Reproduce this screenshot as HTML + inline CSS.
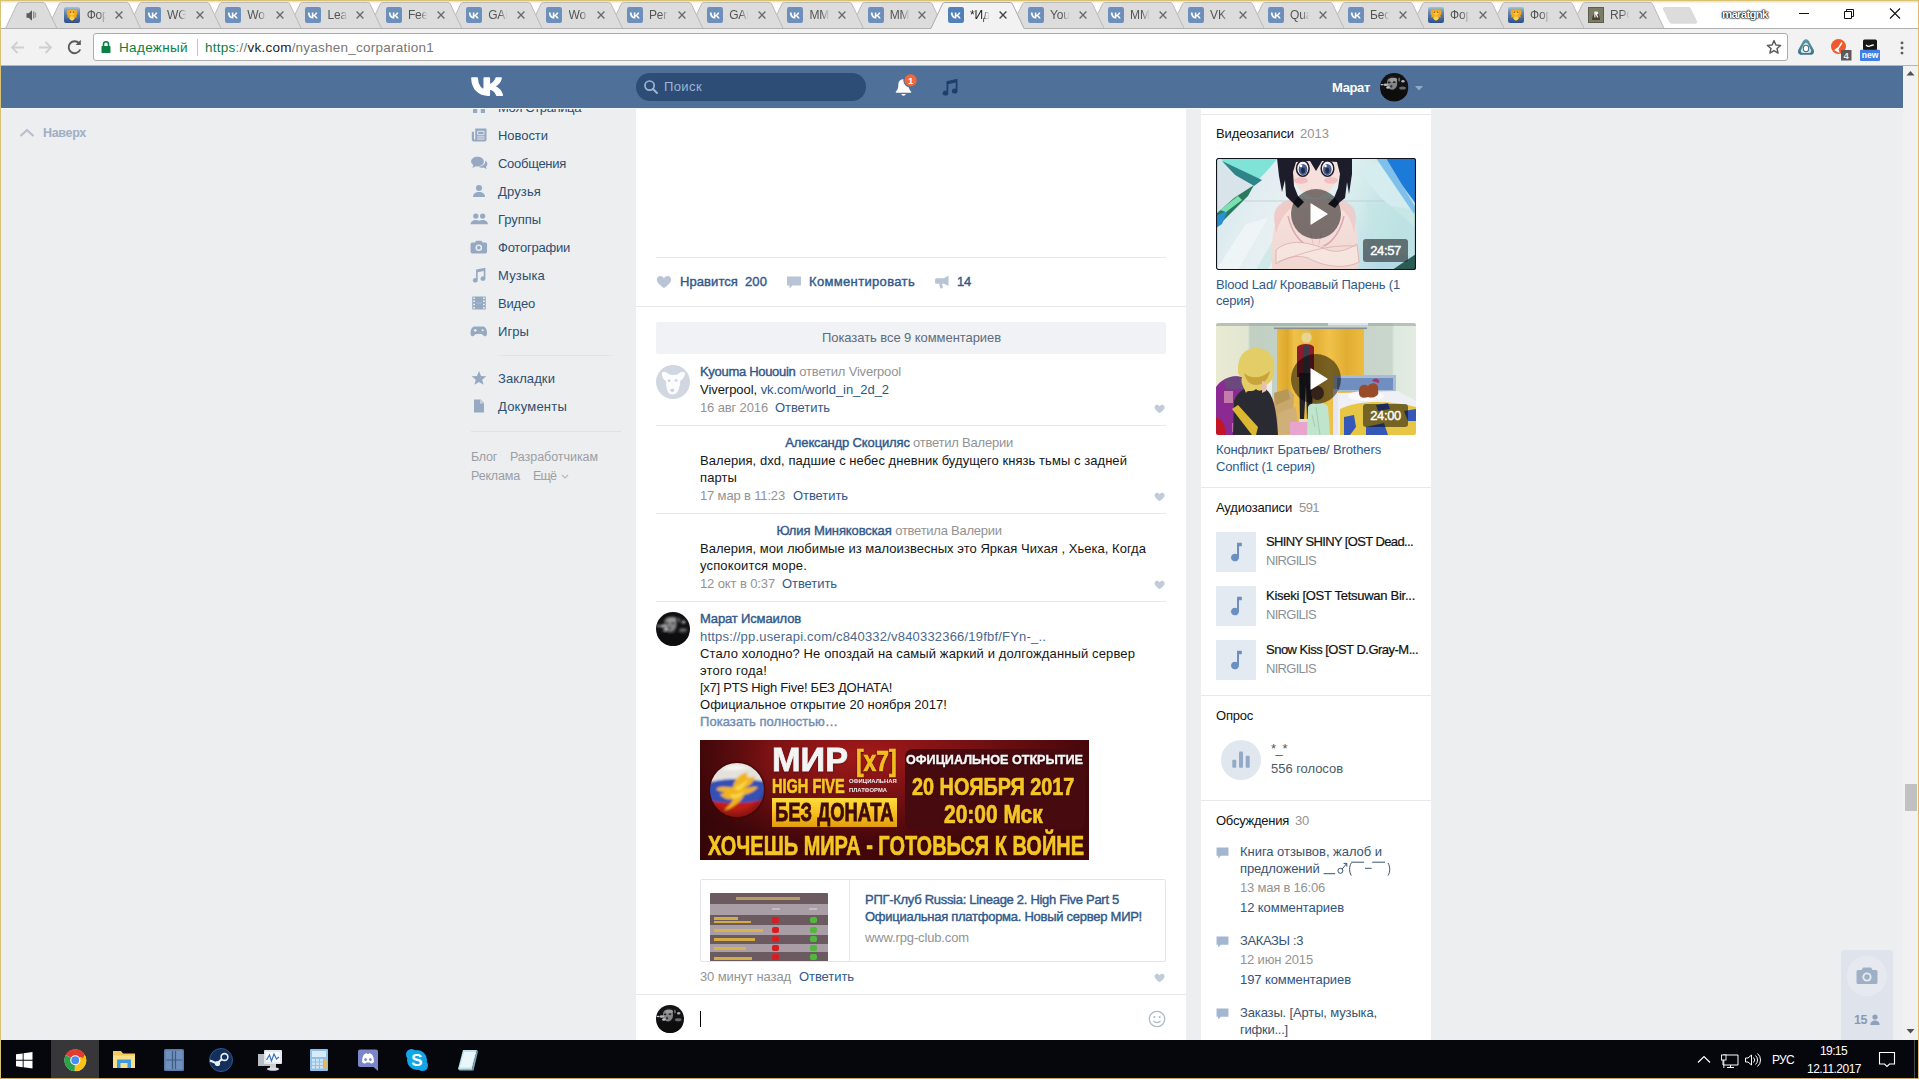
<!DOCTYPE html>
<html lang="ru"><head><meta charset="utf-8"><title>vk</title>
<style>
*{margin:0;padding:0;box-sizing:border-box}
html,body{width:1919px;height:1079px;overflow:hidden;background:#edeef0;font-family:"Liberation Sans",sans-serif;font-size:13px}
.a{position:absolute}
.t{position:absolute;white-space:nowrap}
svg{position:absolute;overflow:visible}
.sep{position:absolute;height:1px;background:#e7e8ec}
.b{font-weight:700}
</style></head><body>

<div class="a" style="left:636px;top:108px;width:550px;height:932px;background:#fff"></div>
<div class="a" style="left:1201px;top:108px;width:230px;height:932px;background:#fff"></div>
<svg width="16" height="10" style="left:19px;top:128px" viewBox="0 0 16 10"><path d="M1.5,8 L8,2 L14.5,8" stroke="#b4bdc9" stroke-width="2" fill="none"/></svg>
<span class="t" style="left:43px;top:125.00px;font-size:12.5px;line-height:16px;color:#a0afc3;font-weight:700;letter-spacing:-0.312px;">Наверх</span>
<svg width="16.0" height="16.0" style="left:471.0px;top:99.0px" viewBox="0 0 16 16"><path d="M2,7.5 L8,2 L14,7.5 V14 H9.8 V9.5 H6.2 V14 H2z" fill="#96a9c2"/></svg>
<span class="t" style="left:498px;top:98.50px;font-size:13px;line-height:17px;color:#2b4f72;letter-spacing:-0.398px;">Моя Страница</span>
<svg width="16.0" height="16.0" style="left:471.0px;top:127.0px" viewBox="0 0 16 16"><path d="M4.2,1.500 H15.500 V12.800 a1.700,1.700 0 0 1 -1.700,1.700 H2.700 a1.900,1.900 0 0 1 -1.900,-1.900 V4.800 H3 V12 a0.600,0.600 0 0 0 1.200,0z" fill="#96a9c2"/><path d="M6.700,4.300 h6.300 v3.400 h-6.300z" stroke="#e4e8ee" stroke-width="1" fill="none"/><path d="M6.200,9.900 h7.300 M6.200,12 h7.300" stroke="#e4e8ee" stroke-width="1"/></svg>
<span class="t" style="left:498px;top:126.50px;font-size:13px;line-height:17px;color:#2b4f72;letter-spacing:-0.047px;">Новости</span>
<svg width="17.6" height="17.6" style="left:470.2px;top:154.2px" viewBox="0 0 16 16"><path d="M6.8,2.5 c3.3,0 5.8,1.9 5.8,4.4 c0,2.5 -2.5,4.4 -5.8,4.4 c-0.6,0 -1.2,-0.1 -1.8,-0.2 c-0.8,0.7 -1.9,1.2 -3,1.3 c0.6,-0.7 0.9,-1.500 1,-2.4 C1.700,9.200 1,8.100 1,6.900 C1,4.400 3.500,2.500 6.800,2.500z" fill="#96a9c2"/><path d="M13.800,6 c1.200,0.700 2,1.800 2,3 c0,1 -0.500,1.900 -1.300,2.600 c0.100,0.700 0.400,1.400 0.900,1.900 c-1,-0.100 -1.900,-0.500 -2.600,-1.100 c-0.500,0.100 -1,0.200 -1.600,0.200 c-1.300,0 -2.500,-0.400 -3.400,-1 c3.500,-0.300 6.100,-2.400 6.100,-5 c0,-0.200 0,-0.400 -0.100,-0.600z" fill="#96a9c2"/></svg>
<span class="t" style="left:498px;top:154.50px;font-size:13px;line-height:17px;color:#2b4f72;letter-spacing:-0.285px;">Сообщения</span>
<svg width="16.0" height="16.0" style="left:471.0px;top:183.0px" viewBox="0 0 16 16"><circle cx="8" cy="5" r="3" fill="#96a9c2"/><path d="M2,14 c0,-3.300 2.500,-5 6,-5 c3.500,0 6,1.700 6,5z" fill="#96a9c2"/></svg>
<span class="t" style="left:498px;top:182.50px;font-size:13px;line-height:17px;color:#2b4f72;letter-spacing:0.138px;">Друзья</span>
<svg width="17.6" height="17.6" style="left:470.2px;top:210.2px" viewBox="0 0 16 16"><circle cx="5.300" cy="5.500" r="2.400" fill="#96a9c2"/><circle cx="11.500" cy="5.500" r="2.400" fill="#96a9c2"/><path d="M0.500,13 c0,-2.600 2,-4 4.800,-4 c1.200,0 2.200,0.300 3,0.700 c0.800,-0.400 1.900,-0.700 3.200,-0.700 c2.800,0 4.800,1.400 4.800,4z" fill="#96a9c2"/></svg>
<span class="t" style="left:498px;top:210.50px;font-size:13px;line-height:17px;color:#2b4f72;letter-spacing:-0.055px;">Группы</span>
<svg width="17.6" height="17.6" style="left:470.2px;top:238.2px" viewBox="0 0 16 16"><path d="M5.500,2.500 h5 l1,1.700 h2.500 a1.500,1.500 0 0 1 1.500,1.500 v6.800 a1.500,1.500 0 0 1 -1.500,1.500 h-12 a1.500,1.500 0 0 1 -1.500,-1.500 v-6.800 a1.500,1.500 0 0 1 1.500,-1.500 h2.500z" fill="#96a9c2"/><circle cx="8" cy="8.800" r="3" fill="#edeef0"/><circle cx="8" cy="8.800" r="1.700" fill="#96a9c2"/></svg>
<span class="t" style="left:498px;top:238.50px;font-size:13px;line-height:17px;color:#2b4f72;letter-spacing:-0.230px;">Фотографии</span>
<svg width="17.6" height="17.6" style="left:470.2px;top:266.2px" viewBox="0 0 16 16"><path d="M5.500,3.200 L14,1.500 V11.500 a2.200,2 0 1 1 -1.500,-1.900 V4.600 L7,5.700 V13 a2.200,2 0 1 1 -1.500,-1.900 z" fill="#96a9c2"/></svg>
<span class="t" style="left:498px;top:266.50px;font-size:13px;line-height:17px;color:#2b4f72;letter-spacing:0.169px;">Музыка</span>
<svg width="16.0" height="16.0" style="left:471.0px;top:295.0px" viewBox="0 0 16 16"><rect x="1.200" y="1.500" width="13.600" height="13" rx="0.800" fill="#96a9c2"/><path d="M2.300,3.300 h1.700 M2.300,6.300 h1.700 M2.300,9.500 h1.700 M2.300,12.700 h1.700 M12,3.300 h1.700 M12,6.300 h1.700 M12,9.500 h1.700 M12,12.700 h1.700" stroke="#edeef0" stroke-width="1.600"/><path d="M5.300,8 h5.400" stroke="#b9c6d8" stroke-width="0.700"/></svg>
<span class="t" style="left:498px;top:294.50px;font-size:13px;line-height:17px;color:#2b4f72;letter-spacing:-0.197px;">Видео</span>
<svg width="17.6" height="17.6" style="left:470.2px;top:322.2px" viewBox="0 0 16 16"><path d="M4.500,4 h7 c2.500,0 3.800,2.500 4,5.500 c0.200,2.500 -0.800,3.500 -2,3.500 c-1.500,0 -2,-2 -3.500,-2 h-4 c-1.500,0 -2,2 -3.500,2 c-1.200,0 -2.200,-1 -2,-3.500 c0.200,-3 1.500,-5.500 4,-5.500z" fill="#96a9c2"/><circle cx="11.500" cy="7.500" r="1" fill="#edeef0"/><path d="M4.800,6.300 v2.600 M3.500,7.600 h2.600" stroke="#edeef0" stroke-width="1"/></svg>
<span class="t" style="left:498px;top:322.50px;font-size:13px;line-height:17px;color:#2b4f72;letter-spacing:0.082px;">Игры</span>
<div class="sep" style="left:495px;top:355px;width:121px;background:linear-gradient(90deg,rgba(223,225,229,0),#dfe1e5 8%,#dfe1e5 92%,rgba(223,225,229,0))"></div>
<svg width="16.0" height="16.0" style="left:471.0px;top:370.0px" viewBox="0 0 16 16"><path d="M8,1 L10,6 L15.300,6.300 L11.200,9.700 L12.600,14.800 L8,11.900 L3.400,14.800 L4.800,9.700 L0.700,6.300 L6,6z" fill="#96a9c2"/></svg>
<span class="t" style="left:498px;top:370.00px;font-size:13px;line-height:17px;color:#2b4f72;letter-spacing:0.092px;">Закладки</span>
<svg width="16.0" height="16.0" style="left:471.0px;top:398.0px" viewBox="0 0 16 16"><path d="M3,1.500 h6.500 l3.500,3.500 v9.500 h-10z" fill="#96a9c2"/><path d="M9,1.500 v4 h4z" fill="#c9d3df"/></svg>
<span class="t" style="left:498px;top:398.00px;font-size:13px;line-height:17px;color:#2b4f72;letter-spacing:0.220px;">Документы</span>
<div class="sep" style="left:471px;top:431px;width:150px;background:#dfe1e5"></div>
<span class="t" style="left:471px;top:448.75px;font-size:12.5px;line-height:16.5px;color:#9a9ea3;letter-spacing:-0.254px;">Блог</span>
<span class="t" style="left:510px;top:448.75px;font-size:12.5px;line-height:16.5px;color:#9a9ea3;letter-spacing:-0.055px;">Разработчикам</span>
<span class="t" style="left:471px;top:467.75px;font-size:12.5px;line-height:16.5px;color:#9a9ea3;letter-spacing:-0.163px;">Реклама</span>
<span class="t" style="left:533px;top:467.75px;font-size:12.5px;line-height:16.5px;color:#9a9ea3;letter-spacing:-0.859px;">Ещё</span>
<svg width="8" height="6" style="left:561px;top:474px" viewBox="0 0 8 6"><path d="M1,1 L4,4 L7,1" stroke="#b5b9bf" stroke-width="1.200" fill="none"/></svg>
<div class="sep" style="left:656px;top:257px;width:510px"></div>
<svg width="16.0" height="14.0" style="left:656px;top:275px" viewBox="0 0 16 14"><path d="M8,13.200 C5,10.800 0.800,7.800 0.800,4.500 C0.800,2.400 2.400,0.900 4.300,0.900 C5.800,0.900 7.200,1.800 8,3.200 C8.800,1.800 10.200,0.900 11.700,0.900 C13.600,0.900 15.200,2.400 15.200,4.500 C15.200,7.800 11,10.800 8,13.200z" fill="#b9c5d6"/></svg>
<span class="t" style="left:680px;top:272.80px;font-size:13px;line-height:17px;color:#31598a;-webkit-text-stroke:0.4px;letter-spacing:0.078px;">Нравится</span>
<span class="t" style="left:745px;top:272.80px;font-size:13px;line-height:17px;color:#31598a;-webkit-text-stroke:0.4px;letter-spacing:0.099px;">200</span>
<svg width="16" height="14" style="left:786px;top:276px" viewBox="0 0 16 14"><path d="M1,0.500 h14 v9 h-8.500 l-3,3 v-3 h-2.500z" fill="#b9c5d6"/></svg>
<span class="t" style="left:809px;top:272.80px;font-size:13px;line-height:17px;color:#31598a;-webkit-text-stroke:0.4px;letter-spacing:0.343px;">Комментировать</span>
<svg width="16" height="14" style="left:934px;top:275px" viewBox="0 0 16 14"><path d="M14.500,0.500 v10.500 l-4.500,-2.200 h-2 l1,4.500 h-2.800 l-1,-4.500 h-2.700 a1.500,1.500 0 0 1 -1.500,-1.500 v-2.500 a1.500,1.500 0 0 1 1.500,-1.500 h7.500z" fill="#b9c5d6"/></svg>
<span class="t" style="left:957px;top:272.80px;font-size:13px;line-height:17px;color:#31598a;-webkit-text-stroke:0.4px;letter-spacing:-0.234px;">14</span>
<div class="sep" style="left:636px;top:306px;width:550px"></div>
<div class="a" style="left:656px;top:322px;width:510px;height:32px;background:#f0f2f5;border-radius:2px"></div>
<span class="t" style="left:822px;top:328.80px;font-size:13px;line-height:17px;color:#5e6c7d;letter-spacing:-0.068px;">Показать все 9 комментариев</span>
<svg width="34" height="34" style="left:656px;top:365px" viewBox="0 0 34 34"><circle cx="17" cy="17" r="17" fill="#d1d7e0"/><path d="M6,7.500 C8.500,5.500 11,7.500 13,9.200 C15.500,10.200 19.500,10.200 22,9.200 C24,7.500 26.500,5.500 29,7.800 C29,12 26.500,14.500 24.200,16 C24.200,20.500 22.500,27 19.500,28.800 C17.500,29.800 15,29.800 13,28.300 C10.800,26 10,20.500 10,16 C7.500,14.500 5.500,12 6,7.500Z" fill="#fbfcfd"/><rect x="11.800" y="14.500" width="2.600" height="2.400" rx="0.600" fill="#cfd4dc"/><rect x="18.700" y="14.200" width="2.800" height="2.400" rx="0.600" fill="#cfd4dc"/><ellipse cx="16.300" cy="25.200" rx="2" ry="1.800" fill="#cdd3db"/></svg>
<span class="t" style="left:700px;top:363.00px;font-size:13px;line-height:17px;color:#31598a;-webkit-text-stroke:0.4px;letter-spacing:-0.310px;">Kyouma Hououin</span>
<span class="t" style="left:799.3px;top:363.00px;font-size:13px;line-height:17px;color:#939393;letter-spacing:-0.191px;">ответил Viverpool</span>
<span class="t" style="left:700px;top:381.00px;font-size:13px;line-height:17px;color:#161616;letter-spacing:-0.050px;">Viverpool, <span style="color:#2a5885">vk.com/world_in_2d_2</span></span>
<span class="t" style="left:700px;top:399.00px;font-size:13px;line-height:17px;color:#939393;letter-spacing:-0.135px;">16 авг 2016</span>
<span class="t" style="left:775px;top:399.00px;font-size:13px;line-height:17px;color:#31598a;letter-spacing:-0.072px;">Ответить</span>
<svg width="11.2" height="9.799999999999999" style="left:1154px;top:403.5px" viewBox="0 0 16 14"><path d="M8,13.200 C5,10.800 0.800,7.800 0.800,4.500 C0.800,2.400 2.400,0.900 4.300,0.900 C5.800,0.900 7.200,1.800 8,3.200 C8.800,1.800 10.200,0.900 11.700,0.900 C13.600,0.900 15.200,2.400 15.200,4.500 C15.200,7.800 11,10.800 8,13.200z" fill="#c1ccd9"/></svg>
<div class="sep" style="left:656px;top:425px;width:510px"></div>
<span class="t" style="left:785.3px;top:434.00px;font-size:13px;line-height:17px;color:#31598a;-webkit-text-stroke:0.4px;letter-spacing:-0.136px;">Александр Скоциляс</span>
<span class="t" style="left:913px;top:434.00px;font-size:13px;line-height:17px;color:#939393;letter-spacing:-0.223px;">ответил Валерии</span>
<span class="t" style="left:700px;top:452.00px;font-size:13px;line-height:17px;color:#161616;letter-spacing:0.053px;">Валерия, dxd, падшие с небес дневник будущего князь тьмы с задней</span>
<span class="t" style="left:700px;top:469.00px;font-size:13px;line-height:17px;color:#161616;letter-spacing:0.097px;">парты</span>
<span class="t" style="left:700px;top:487.00px;font-size:13px;line-height:17px;color:#939393;letter-spacing:-0.155px;">17 мар в 11:23</span>
<span class="t" style="left:793px;top:487.00px;font-size:13px;line-height:17px;color:#31598a;letter-spacing:-0.072px;">Ответить</span>
<svg width="11.2" height="9.799999999999999" style="left:1154px;top:491.5px" viewBox="0 0 16 14"><path d="M8,13.200 C5,10.800 0.800,7.800 0.800,4.500 C0.800,2.400 2.400,0.900 4.300,0.900 C5.800,0.900 7.200,1.800 8,3.200 C8.800,1.800 10.200,0.900 11.700,0.900 C13.600,0.900 15.200,2.400 15.200,4.500 C15.200,7.800 11,10.800 8,13.200z" fill="#c1ccd9"/></svg>
<div class="sep" style="left:656px;top:513px;width:510px"></div>
<span class="t" style="left:776.4px;top:522.00px;font-size:13px;line-height:17px;color:#31598a;-webkit-text-stroke:0.4px;letter-spacing:-0.102px;">Юлия Миняковская</span>
<span class="t" style="left:895.2px;top:522.00px;font-size:13px;line-height:17px;color:#939393;letter-spacing:-0.249px;">ответила Валерии</span>
<span class="t" style="left:700px;top:540.00px;font-size:13px;line-height:17px;color:#161616;letter-spacing:0.034px;">Валерия, мои любимые из малоизвесных это Яркая Чихая , Хьека, Когда</span>
<span class="t" style="left:700px;top:557.00px;font-size:13px;line-height:17px;color:#161616;letter-spacing:0.146px;">успокоится море.</span>
<span class="t" style="left:700px;top:575.00px;font-size:13px;line-height:17px;color:#939393;letter-spacing:-0.118px;">12 окт в 0:37</span>
<span class="t" style="left:782px;top:575.00px;font-size:13px;line-height:17px;color:#31598a;letter-spacing:-0.072px;">Ответить</span>
<svg width="11.2" height="9.799999999999999" style="left:1154px;top:579.5px" viewBox="0 0 16 14"><path d="M8,13.200 C5,10.800 0.800,7.800 0.800,4.500 C0.800,2.400 2.400,0.900 4.300,0.900 C5.800,0.900 7.200,1.800 8,3.200 C8.800,1.800 10.200,0.900 11.700,0.900 C13.600,0.900 15.200,2.400 15.200,4.500 C15.200,7.800 11,10.800 8,13.200z" fill="#c1ccd9"/></svg>
<div class="sep" style="left:656px;top:601px;width:510px"></div>
<svg width="34" height="34" style="left:656px;top:612px" viewBox="0 0 34 34"><defs><clipPath id="av656612"><circle cx="17" cy="17" r="17"/></clipPath><filter id="av656612f"><feGaussianBlur stdDeviation="0.9"/></filter></defs><g clip-path="url(#av656612)"><rect width="34" height="34" fill="#121214"/><g filter="url(#av656612f)"><ellipse cx="14.500" cy="12" rx="6.200" ry="8" fill="#858587"/><ellipse cx="16" cy="8" rx="4.500" ry="3" fill="#9a9a9c"/><path d="M7,9 C9,2 22,1 24,9 L22,7 C18,5 12,5 9,8Z" fill="#1a1a1c"/><ellipse cx="11" cy="11.300" rx="1.700" ry="1" fill="#202022"/><ellipse cx="17" cy="11" rx="1.800" ry="1" fill="#202022"/><ellipse cx="13.500" cy="16" rx="1.300" ry="1.600" fill="#3a3a3c"/><ellipse cx="7" cy="14" rx="2.800" ry="1.500" fill="#b8b8ba"/><ellipse cx="9.500" cy="17.500" rx="2" ry="1.500" fill="#c4c4c6"/><ellipse cx="2.500" cy="14" rx="1.800" ry="0.800" fill="#d0d0d2"/><ellipse cx="27.500" cy="10" rx="2" ry="1.500" fill="#b0b0b2"/><ellipse cx="27" cy="18" rx="4" ry="1.800" fill="#6a6a6c"/><ellipse cx="23" cy="8" rx="1" ry="2.500" fill="#707072"/><path d="M2,22 C8,18 12,20 15,22 C20,19 28,20 33,24 L34,34 L0,34Z" fill="#0c0c0e"/></g></g></svg>
<span class="t" style="left:700px;top:610.00px;font-size:13px;line-height:17px;color:#31598a;-webkit-text-stroke:0.4px;letter-spacing:-0.150px;">Марат Исмаилов</span>
<span class="t" style="left:700px;top:628.00px;font-size:13px;line-height:17px;color:#4a688c;letter-spacing:0.194px;">https://pp.userapi.com/c840332/v840332366/19fbf/FYn-_..</span>
<span class="t" style="left:700px;top:645.00px;font-size:13px;line-height:17px;color:#161616;letter-spacing:0.120px;">Стало холодно? Не опоздай на самый жаркий и долгожданный сервер</span>
<span class="t" style="left:700px;top:662.00px;font-size:13px;line-height:17px;color:#161616;letter-spacing:0.226px;">этого года!</span>
<span class="t" style="left:700px;top:679.00px;font-size:13px;line-height:17px;color:#161616;letter-spacing:-0.249px;">[x7] PTS High Five! БЕЗ ДОНАТА!</span>
<span class="t" style="left:700px;top:696.00px;font-size:13px;line-height:17px;color:#161616;letter-spacing:0.026px;">Официальное открытие 20 ноября 2017!</span>
<span class="t" style="left:700px;top:713.00px;font-size:13px;line-height:17px;color:#6f8db3;-webkit-text-stroke:0.4px;letter-spacing:0.061px;">Показать полностью…</span>
<div class="a" style="left:700px;top:740px;width:389px;height:120px;background:radial-gradient(ellipse 60% 75% at 42% 12%,#a31a1a 0,#7d1214 40%,#5c0b0e 75%,#43070a 100%)"></div>
<div class="a" style="left:700px;top:740px;width:70px;height:120px;background:linear-gradient(90deg,rgba(40,4,6,.55),rgba(40,4,6,0))"></div>
<div class="a" style="left:904.7px;top:749.2px;width:180.6px;height:81.2px;border-radius:8px;background:#460a0f"></div>
<svg width="58" height="58" style="left:707.500px;top:760.500px" viewBox="0 0 58 58"><defs><clipPath id="gl"><circle cx="29" cy="29" r="27"/></clipPath><radialGradient id="glr" cx=".45" cy=".3" r=".75"><stop offset=".7" stop-color="#000" stop-opacity="0"/><stop offset="1" stop-color="#200" stop-opacity=".55"/></radialGradient><filter id="glb"><feGaussianBlur stdDeviation="0.8"/></filter></defs><circle cx="29" cy="29" r="28.500" fill="#3a0506" opacity=".6"/><g clip-path="url(#gl)"><g filter="url(#glb)"><rect width="58" height="58" fill="#e4e2dc"/><path d="M0,22 C14,17 40,17 58,21 L58,42 L0,42Z" fill="#3550b4"/><path d="M0,39 C14,43 40,43 58,38 L58,58 L0,58Z" fill="#c01c18"/><path d="M8,28 C14,24 20,27 25,26 C26,20 30,13 40,11 C37,16 41,18 47,15 C46,22 40,26 36,27 C40,27 46,25 50,26 C46,31 40,33 36,34 C34,40 26,46 16,50 C20,45 24,42 25,38 C20,39 14,37 12,33 C14,33 16,32 17,31 C13,31 10,30 8,28Z" fill="#f2b41c"/><path d="M26,27 C30,24 36,22 40,18 C38,24 34,28 30,30Z M22,33 C27,34 32,33 36,30 C34,36 28,38 24,37Z" fill="#f8d648"/><path d="M14,8 C22,3 34,3 42,8 C36,7 30,10 24,9 C20,9 17,9 14,8Z" fill="#f6f6f4"/></g><rect width="58" height="58" fill="url(#glr)"/></g></svg>
<span class="t" style="left:772.2px;top:742.85px;font-size:32.8px;line-height:34px;color:#f4f4f4;font-weight:700;transform:scaleX(1.0442);transform-origin:0 50%;text-shadow:0 1px 2px rgba(30,0,0,.8);-webkit-text-stroke:0.8px #f4f4f4;">МИР</span>
<span class="t" style="left:855.6px;top:745.00px;font-size:29px;line-height:32px;color:#f0bc1e;font-weight:700;transform:scaleX(0.7872);transform-origin:0 50%;text-shadow:0 1px 2px rgba(30,0,0,.8);-webkit-text-stroke:0.7px #f6c624;">[x7]</span>
<span class="t" style="left:772.2px;top:774.85px;font-size:20px;line-height:22px;color:#f6c624;font-weight:700;transform:scaleX(0.7269);transform-origin:0 50%;text-shadow:0 1px 2px rgba(30,0,0,.8);-webkit-text-stroke:0.7px #f6c624;">HIGH FIVE</span>
<span class="t" style="left:849px;top:778.00px;font-size:5.4px;line-height:7px;color:#f0f0f0;font-weight:700;transform:scaleX(1.0922);transform-origin:0 50%;">ОФИЦИАЛЬНАЯ</span>
<span class="t" style="left:849px;top:786.50px;font-size:5.4px;line-height:7px;color:#f0f0f0;font-weight:700;transform:scaleX(1.0833);transform-origin:0 50%;">ПЛАТФОРМА</span>
<div class="a" style="left:772.2px;top:798.3px;width:124.6px;height:28.9px;background:linear-gradient(180deg,#ffdc3e 0,#f7bd1c 55%,#e39c10 100%)"></div>
<span class="t" style="left:775.4px;top:797.70px;font-size:25.4px;line-height:28px;color:#3d0b08;font-weight:700;transform:scaleX(0.7248);transform-origin:0 50%;-webkit-text-stroke:0.8px #3d0b08;">БЕЗ ДОНАТА</span>
<span class="t" style="left:905.8px;top:752.40px;font-size:13.4px;line-height:16px;color:#f6f6f6;font-weight:700;transform:scaleX(0.9414);transform-origin:0 50%;text-shadow:0 1px 2px rgba(30,0,0,.8);-webkit-text-stroke:0.4px #f6f6f6;">ОФИЦИАЛЬНОЕ ОТКРЫТИЕ</span>
<span class="t" style="left:912.2px;top:773.50px;font-size:24px;line-height:26px;color:#f6c624;font-weight:700;transform:scaleX(0.8275);transform-origin:0 50%;text-shadow:0 1px 2px rgba(30,0,0,.8);-webkit-text-stroke:0.7px #f6c624;">20 НОЯБРЯ 2017</span>
<span class="t" style="left:943.8px;top:801.40px;font-size:25px;line-height:27px;color:#f6c624;font-weight:700;transform:scaleX(0.8378);transform-origin:0 50%;text-shadow:0 1px 2px rgba(30,0,0,.8);-webkit-text-stroke:0.7px #f6c624;">20:00 Мск</span>
<span class="t" style="left:708.1px;top:830.85px;font-size:28px;line-height:30px;color:#f6c624;font-weight:700;transform:scaleX(0.7130);transform-origin:0 50%;text-shadow:0 1px 2px rgba(30,0,0,.8);-webkit-text-stroke:0.7px #f6c624;">ХОЧЕШЬ МИРА - ГОТОВЬСЯ К ВОЙНЕ</span>
<div class="a" style="left:700px;top:879px;width:466px;height:83px;border:1px solid #e1e4e9;border-radius:2px;background:#fff;overflow:hidden"><div class="a" style="left:148px;top:0;width:1px;height:83px;background:#e7e8ec"></div><div class="a" style="left:9.400px;top:13.400px;width:117.600px;height:70px;background:#6b5b60;border-radius:1px 1px 0 0"><div class="a" style="left:0;top:10.4px;width:117.600px;height:10.9px;background:#a99da6"></div><div class="a" style="left:0;top:31.6px;width:117.600px;height:9.7px;background:#a99da6"></div><div class="a" style="left:0;top:50.4px;width:117.600px;height:8.4px;background:#a99da6"></div><div class="a" style="left:26px;top:4px;width:64px;height:2.500px;background:#c9a85c;opacity:.85"></div><div class="a" style="left:62px;top:15px;width:8px;height:2px;background:#c4bcc4"></div><div class="a" style="left:99px;top:15px;width:8px;height:2px;background:#c4bcc4"></div><div class="a" style="left:4px;top:24px;width:24px;height:2.2px;background:#dcb644;opacity:.9"></div><div class="a" style="left:4px;top:27.5px;width:37px;height:2.2px;background:#dcb644;opacity:.9"></div><div class="a" style="left:4px;top:35.5px;width:49px;height:2.8px;background:#dcb644;opacity:.9"></div><div class="a" style="left:4px;top:45px;width:41px;height:2.8px;background:#dcb644;opacity:.9"></div><div class="a" style="left:4px;top:54px;width:32px;height:2.8px;background:#dcb644;opacity:.9"></div><div class="a" style="left:4px;top:63.5px;width:38px;height:2.8px;background:#dcb644;opacity:.9"></div><div class="a" style="left:62px;top:23.2px;width:6.500px;height:6.500px;border-radius:2px;background:#d91c22"></div><div class="a" style="left:99.500px;top:23.7px;width:7.500px;height:5.500px;border-radius:2px;background:#52b83c"></div><div class="a" style="left:62px;top:33.2px;width:6.500px;height:6.500px;border-radius:2px;background:#d91c22"></div><div class="a" style="left:99.500px;top:33.7px;width:7.500px;height:5.500px;border-radius:2px;background:#52b83c"></div><div class="a" style="left:62px;top:42.5px;width:6.500px;height:6.500px;border-radius:2px;background:#d91c22"></div><div class="a" style="left:99.500px;top:43.0px;width:7.500px;height:5.500px;border-radius:2px;background:#52b83c"></div><div class="a" style="left:62px;top:51.5px;width:6.500px;height:6.500px;border-radius:2px;background:#d91c22"></div><div class="a" style="left:99.500px;top:52.0px;width:7.500px;height:5.500px;border-radius:2px;background:#52b83c"></div><div class="a" style="left:62px;top:60.5px;width:6.500px;height:6.500px;border-radius:2px;background:#d91c22"></div><div class="a" style="left:99.500px;top:61.0px;width:7.500px;height:5.500px;border-radius:2px;background:#52b83c"></div></div></div>
<span class="t" style="left:865px;top:891.00px;font-size:13px;line-height:17px;color:#31598a;-webkit-text-stroke:0.4px;letter-spacing:-0.290px;">РПГ-Клуб Russia: Lineage 2. High Five Part 5</span>
<span class="t" style="left:865px;top:908.00px;font-size:13px;line-height:17px;color:#31598a;-webkit-text-stroke:0.4px;letter-spacing:-0.263px;">Официальная платформа. Новый сервер МИР!</span>
<span class="t" style="left:865px;top:929.00px;font-size:13px;line-height:17px;color:#939393;letter-spacing:-0.138px;">www.rpg-club.com</span>
<span class="t" style="left:700px;top:968.00px;font-size:13px;line-height:17px;color:#939393;letter-spacing:-0.112px;">30 минут назад</span>
<span class="t" style="left:799px;top:968.00px;font-size:13px;line-height:17px;color:#31598a;letter-spacing:-0.072px;">Ответить</span>
<svg width="11.2" height="9.799999999999999" style="left:1154px;top:972.5px" viewBox="0 0 16 14"><path d="M8,13.200 C5,10.800 0.800,7.800 0.800,4.500 C0.800,2.400 2.400,0.900 4.300,0.900 C5.800,0.900 7.200,1.800 8,3.200 C8.800,1.800 10.200,0.900 11.700,0.900 C13.600,0.900 15.200,2.400 15.200,4.500 C15.200,7.800 11,10.800 8,13.200z" fill="#c1ccd9"/></svg>
<div class="sep" style="left:636px;top:994px;width:550px"></div>
<svg width="28" height="28" style="left:656px;top:1004.5px" viewBox="0 0 34 34"><defs><clipPath id="av6561004"><circle cx="17" cy="17" r="17"/></clipPath><filter id="av6561004f"><feGaussianBlur stdDeviation="0.9"/></filter></defs><g clip-path="url(#av6561004)"><rect width="34" height="34" fill="#121214"/><g filter="url(#av6561004f)"><ellipse cx="14.500" cy="12" rx="6.200" ry="8" fill="#858587"/><ellipse cx="16" cy="8" rx="4.500" ry="3" fill="#9a9a9c"/><path d="M7,9 C9,2 22,1 24,9 L22,7 C18,5 12,5 9,8Z" fill="#1a1a1c"/><ellipse cx="11" cy="11.300" rx="1.700" ry="1" fill="#202022"/><ellipse cx="17" cy="11" rx="1.800" ry="1" fill="#202022"/><ellipse cx="13.500" cy="16" rx="1.300" ry="1.600" fill="#3a3a3c"/><ellipse cx="7" cy="14" rx="2.800" ry="1.500" fill="#b8b8ba"/><ellipse cx="9.500" cy="17.500" rx="2" ry="1.500" fill="#c4c4c6"/><ellipse cx="2.500" cy="14" rx="1.800" ry="0.800" fill="#d0d0d2"/><ellipse cx="27.500" cy="10" rx="2" ry="1.500" fill="#b0b0b2"/><ellipse cx="27" cy="18" rx="4" ry="1.800" fill="#6a6a6c"/><ellipse cx="23" cy="8" rx="1" ry="2.500" fill="#707072"/><path d="M2,22 C8,18 12,20 15,22 C20,19 28,20 33,24 L34,34 L0,34Z" fill="#0c0c0e"/></g></g></svg>
<div class="a" style="left:700px;top:1011px;width:1px;height:16px;background:#000"></div>
<svg width="18" height="18" style="left:1148.3px;top:1009.6px" viewBox="0 0 18 18"><circle cx="9" cy="9" r="7.700" stroke="#aeb9c9" stroke-width="1.300" fill="none"/><circle cx="6.300" cy="7" r="1" fill="#aeb9c9"/><circle cx="11.700" cy="7" r="1" fill="#aeb9c9"/><path d="M5.500,10.800 c1.800,2.300 5.200,2.300 7,0" stroke="#aeb9c9" stroke-width="1.300" fill="none"/></svg>
<div class="sep" style="left:1201px;top:114px;width:230px"></div>
<span class="t" style="left:1216px;top:125.00px;font-size:13px;line-height:17px;color:#121212;letter-spacing:-0.099px;">Видеозаписи</span>
<span class="t" style="left:1300px;top:125.00px;font-size:13px;line-height:17px;color:#939393;letter-spacing:0.020px;">2013</span>
<svg width="200" height="112" style="left:1216px;top:158px;border-radius:2px" viewBox="0 0 200 112"><defs><linearGradient id="g1" x1="0" y1="0" x2="1" y2="0.25"><stop offset="0" stop-color="#cfe6ea"/><stop offset=".3" stop-color="#e4eef2"/><stop offset=".55" stop-color="#e9f3f3"/><stop offset=".8" stop-color="#cfe9ea"/><stop offset="1" stop-color="#b6d9e6"/></linearGradient><linearGradient id="g1b" x1="0" y1="0" x2="0" y2="1"><stop offset="0" stop-color="#f6e3de"/><stop offset="1" stop-color="#f1d6d2"/></linearGradient><filter id="bl" x="-5%" y="-5%" width="110%" height="110%"><feGaussianBlur stdDeviation="0.7"/></filter><clipPath id="c1"><rect width="200" height="112" rx="2"/></clipPath></defs><g clip-path="url(#c1)"><g filter="url(#bl)"><rect width="200" height="112" fill="url(#g1)"/><polygon points="4,0 62,0 50,14 38,26 10,6" fill="#7fe3d8"/><polygon points="6,3 46,22 38,28 20,18" fill="#2e8488"/><polygon points="0,6 38,28 0,60" fill="#d9e4ea"/><polygon points="0,56 18,40 38,27 32,38 12,58 4,66 0,68" fill="#2b7a5c"/><polygon points="0,58 12,52 6,66 0,70" fill="#2f8fd0"/><polygon points="4,52 22,38 26,42 10,54" fill="#7de0b0"/><polygon points="0,112 30,66 52,60 22,112" fill="#f3f8fa" opacity=".7"/><polygon points="40,112 64,70 70,72 52,112" fill="#c6e6e4" opacity=".7"/><rect x="28" y="42.5" width="172" height="1" fill="#b9cdd0" opacity=".8"/><polygon points="140,8 170,4 200,48 200,70 165,40" fill="#d6edf0" opacity=".9"/><polygon points="150,44 200,52 200,100 160,90" fill="#c2e6e2" opacity=".7"/><polygon points="166,0 200,0 200,46" fill="#1f7ad8"/><polygon points="160,0 170,0 200,50 198,56" fill="#7fc0ea"/><polygon points="200,96 200,112 176,112" fill="#2b5c52"/><path d="M56,112 C54,76 58,48 80,41 L118,41 C140,48 144,76 142,112 Z" fill="url(#g1b)"/><path d="M58,60 C58,48 66,42 80,41 L90,41 C74,48 64,58 60,76Z" fill="#efc4c2" opacity=".8"/><path d="M140,60 C140,48 132,42 118,41 L110,41 C126,48 136,58 138,76Z" fill="#efc4c2" opacity=".7"/><path d="M72,58 C76,74 84,84 92,88 M128,58 C124,74 116,84 108,88" stroke="#dca6b0" stroke-width="1.4" fill="none"/><path d="M94,70 C97,84 98,92 100,96 C102,92 103,84 106,70 C104,82 103,90 100,92 C97,90 96,82 94,70Z" fill="#d99aa6"/><path d="M92,86 L100,98 L108,86 L104,100 L96,100Z" fill="#e3a8b4"/><path d="M60,92 C74,80 92,84 112,92 C124,96 134,90 141,86 L143,104 C128,112 106,108 92,100 C80,96 68,100 60,106Z" fill="#f6e4df" stroke="#d9aeac" stroke-width=".8"/><path d="M62,104 C84,96 110,86 140,88" stroke="#d9aeac" stroke-width=".8" fill="none"/><path d="M74,0 L126,0 C127,14 122,26 112,34 C106,38 102,40 100,40 C98,40 92,38 86,33 C77,26 73,14 74,0Z" fill="#f6e0db"/><ellipse cx="85" cy="22.5" rx="7" ry="3.2" fill="#f1b4b8" opacity=".75"/><ellipse cx="115" cy="22.5" rx="7" ry="3.2" fill="#f1b4b8" opacity=".75"/><ellipse cx="86.8" cy="10.5" rx="6.3" ry="7.8" fill="#f4f4f8" stroke="#1b1b28" stroke-width="1.5"/><ellipse cx="87" cy="11.5" rx="4.3" ry="5.6" fill="#4a5f92"/><ellipse cx="87" cy="12.5" rx="2" ry="3" fill="#232b4a"/><circle cx="85" cy="8" r="1.3" fill="#fff"/><ellipse cx="111.5" cy="10.5" rx="6.3" ry="7.8" fill="#f4f4f8" stroke="#1b1b28" stroke-width="1.5"/><ellipse cx="111.3" cy="11.5" rx="4.3" ry="5.6" fill="#4a5f92"/><ellipse cx="111.3" cy="12.5" rx="2" ry="3" fill="#232b4a"/><circle cx="109.5" cy="8" r="1.3" fill="#fff"/><path d="M61,0 L136,0 L136,16 L133,36 L131,24 L129,40 L124,44 L119,50 L112,46 L118,40 L122,30 L124,16 L121,4 L106,3 L100,13 L94,3 L80,4 L77,14 L78,28 L82,38 L88,44 L82,50 L76,44 L70,38 L69,22 L66,34 L63,18Z" fill="#1b1b29"/></g><rect x=".5" y=".5" width="199" height="111" rx="2" fill="none" stroke="#10141a" stroke-width="1.2"/></g></svg>
<div class="a" style="left:1291px;top:189px;width:50px;height:50px;border-radius:50%;background:rgba(0,0,0,.5)"></div><svg width="18" height="22" style="left:1310px;top:203px" viewBox="0 0 18 22"><path d="M0.5,0.8 Q0.5,0 1.3,0.4 L17.3,10.4 Q18,11 17.3,11.6 L1.3,21.600 Q0.5,22 0.5,21.2z" fill="#fff"/></svg>
<div class="a" style="left:1363px;top:239px;width:45px;height:23px;border-radius:3px;background:rgba(0,0,0,.5)"></div>
<span class="t" style="left:1370.3px;top:242.30px;font-size:13px;line-height:17px;color:#fff;-webkit-text-stroke:0.4px;letter-spacing:-0.409px;">24:57</span>
<span class="t" style="left:1216px;top:275.70px;font-size:13px;line-height:17px;color:#31598a;letter-spacing:-0.175px;">Blood Lad/ Кровавый Парень (1</span>
<span class="t" style="left:1216px;top:292.20px;font-size:13px;line-height:17px;color:#31598a;letter-spacing:-0.266px;">серия)</span>
<svg width="200" height="112" style="left:1216px;top:323px;border-radius:2px" viewBox="0 0 200 112"><defs><linearGradient id="g2" x1="0" y1="0" x2="1" y2="0"><stop offset="0" stop-color="#e9ead2"/><stop offset=".16" stop-color="#e2e6d2"/><stop offset=".17" stop-color="#c2d0c4"/><stop offset=".88" stop-color="#c9d6cc"/><stop offset=".89" stop-color="#dde8de"/><stop offset="1" stop-color="#e4ece2"/></linearGradient><linearGradient id="g2c" x1="0" y1="0" x2="1" y2="0"><stop offset="0" stop-color="#eab93c"/><stop offset=".12" stop-color="#dca82c"/><stop offset=".2" stop-color="#efc148"/><stop offset=".45" stop-color="#e4b034"/><stop offset=".6" stop-color="#f0c24a"/><stop offset=".8" stop-color="#e2ae32"/><stop offset="1" stop-color="#ecbc40"/></linearGradient><clipPath id="c2"><rect width="200" height="112" rx="2"/></clipPath></defs><g clip-path="url(#c2)"><g filter="url(#bl)"><rect width="200" height="112" fill="url(#g2)"/><rect x="0" y="0" width="200" height="3" fill="#9aa89c" opacity=".6"/><rect x="112" y="0" width="40" height="2.5" fill="#dfe4ea"/><rect x="61" y="5.5" width="87" height="106" fill="url(#g2c)"/><rect x="58" y="4.5" width="93" height="1.6" fill="#8a8f94"/><rect x="46" y="50" width="10" height="40" fill="#e8ece8"/><circle cx="90.5" cy="14.5" r="5.2" fill="#e8d690"/><path d="M85,11 C86,6 95,6 96,11 L94,9 L91,10 L88,9Z" fill="#d8c060"/><path d="M81,24 C84,20 96,20 98,24 L98,54 L81,54Z" fill="#8c1f2c"/><rect x="87" y="23" width="6" height="30" fill="#3a3a4a"/><path d="M83,50 L97,50 L96,97 L91,97 L90,62 L88,97 L84,97Z" fill="#23232c"/><rect x="83" y="96" width="14" height="3" fill="#e8dcc8"/><path d="M58,70 L72,66 L78,72 L76,104 L66,110 L58,104Z" fill="#c8a86c"/><path d="M58,70 L72,66 L74,76 L60,82Z" fill="#b89858"/><path d="M62,90 L80,84 L82,104 L68,112 L62,112Z" fill="#cfb078"/><rect x="74" y="99" width="18" height="13" fill="#e8a4cc"/><rect x="118" y="52" width="62" height="16" fill="#a9bcd6"/><rect x="121" y="55" width="56" height="12" fill="#6f8fc0"/><rect x="117" y="66" width="5" height="46" fill="#e6e6f2"/><path d="M122,70 L182,68 L200,78 L200,112 L122,112Z" fill="#eef0f6"/><ellipse cx="150" cy="73" rx="18" ry="5" fill="#fafafe"/><path d="M143,70 C142,62 148,60 152,63 C156,58 164,60 162,68 C164,72 158,76 152,74 C147,76 143,74 143,70Z" fill="#9a4c2c"/><path d="M156,58 C158,54 164,55 163,60Z" fill="#a83060"/><path d="M124,86 C140,78 170,76 200,84 L200,112 L124,112Z" fill="#e8c644"/><path d="M128,94 L138,92 L140,104 L134,112 L128,112Z M150,104 L168,100 L172,112 L150,112Z M188,88 L200,86 L200,98 L192,98Z M160,82 L172,80 L174,86 L162,88Z" fill="#3558b8"/><ellipse cx="101.5" cy="70" rx="6.5" ry="7" fill="#6a4630"/><path d="M92,84 C94,78 110,78 112,84 L114,112 L91,112Z" fill="#bfe6cc"/><path d="M100,84 L104,112 M96,92 L99,104" stroke="#9fcdb0" stroke-width="1"/><path d="M0,64 C6,54 22,50 30,56 L34,112 L0,112Z" fill="#8b2a92"/><path d="M8,58 C12,52 26,52 30,58 L28,66 L10,66Z" fill="#6c4a7c"/><rect x="8" y="68" width="9" height="12" fill="#d8a0b8" opacity=".7"/><rect x="16" y="100" width="12" height="9" fill="#d8a0b8" opacity=".6"/><path d="M0,94 C6,96 10,102 10,112 L0,112Z" fill="#c21826"/><path d="M17,112 L18,78 C22,66 34,62 46,64 C56,68 60,80 62,112Z" fill="#2b2b30"/><path d="M16,86 L22,82 L42,104 L40,112 L36,112Z" fill="#dcb832"/><path d="M22,46 C22,30 32,24 42,25 C54,26 60,36 58,48 C58,56 54,60 50,62 C48,66 44,70 40,66 C36,70 32,66 30,70 C28,64 24,60 26,54 C22,52 22,50 22,46Z" fill="#e2cd66"/><path d="M28,50 C34,56 46,56 54,48 C52,58 46,62 40,62 C34,62 30,58 28,50Z" fill="#c9a43a"/><path d="M46,58 C50,58 52,62 50,68 L46,70Z" fill="#e8c0b0"/></g></g></svg>
<div class="a" style="left:1291px;top:354px;width:50px;height:50px;border-radius:50%;background:rgba(0,0,0,.5)"></div><svg width="18" height="22" style="left:1310px;top:368px" viewBox="0 0 18 22"><path d="M0.5,0.8 Q0.5,0 1.3,0.4 L17.3,10.4 Q18,11 17.3,11.6 L1.3,21.600 Q0.5,22 0.5,21.2z" fill="#fff"/></svg>
<div class="a" style="left:1363px;top:404px;width:45px;height:23px;border-radius:3px;background:rgba(0,0,0,.5)"></div>
<span class="t" style="left:1370.3px;top:407.30px;font-size:13px;line-height:17px;color:#fff;-webkit-text-stroke:0.4px;letter-spacing:-0.409px;">24:00</span>
<span class="t" style="left:1216px;top:441.20px;font-size:13px;line-height:17px;color:#31598a;letter-spacing:-0.137px;">Конфликт Братьев/ Brothers</span>
<span class="t" style="left:1216px;top:457.90px;font-size:13px;line-height:17px;color:#31598a;letter-spacing:-0.152px;">Conflict (1 серия)</span>
<div class="sep" style="left:1201px;top:487px;width:230px"></div>
<span class="t" style="left:1216px;top:498.70px;font-size:13px;line-height:17px;color:#121212;letter-spacing:-0.162px;">Аудиозаписи</span>
<span class="t" style="left:1299px;top:498.70px;font-size:13px;line-height:17px;color:#939393;letter-spacing:-0.568px;">591</span>
<div class="a" style="left:1216px;top:532px;width:40px;height:40px;background:#e4eaf1"></div>
<svg width="14" height="20" style="left:1229px;top:542px" viewBox="0 0 14 20"><path d="M8,0.800 h4.800 v3.500 h-2.800 v11.200 a4,3.800 0 1 1 -2,-3.300z" fill="#6a8fc0"/></svg>
<span class="t" style="left:1266px;top:532.50px;font-size:13px;line-height:17px;color:#111;-webkit-text-stroke:0.2px;letter-spacing:-0.618px;">SHINY SHINY [OST Dead...</span>
<span class="t" style="left:1266px;top:551.70px;font-size:13px;line-height:17px;color:#8c9196;letter-spacing:-0.703px;">NIRGILIS</span>
<div class="a" style="left:1216px;top:586px;width:40px;height:40px;background:#e4eaf1"></div>
<svg width="14" height="20" style="left:1229px;top:596px" viewBox="0 0 14 20"><path d="M8,0.800 h4.800 v3.500 h-2.800 v11.200 a4,3.800 0 1 1 -2,-3.300z" fill="#6a8fc0"/></svg>
<span class="t" style="left:1266px;top:586.50px;font-size:13px;line-height:17px;color:#111;-webkit-text-stroke:0.2px;letter-spacing:-0.271px;">Kiseki [OST Tetsuwan Bir...</span>
<span class="t" style="left:1266px;top:605.70px;font-size:13px;line-height:17px;color:#8c9196;letter-spacing:-0.703px;">NIRGILIS</span>
<div class="a" style="left:1216px;top:640px;width:40px;height:40px;background:#e4eaf1"></div>
<svg width="14" height="20" style="left:1229px;top:650px" viewBox="0 0 14 20"><path d="M8,0.800 h4.800 v3.500 h-2.800 v11.200 a4,3.800 0 1 1 -2,-3.300z" fill="#6a8fc0"/></svg>
<span class="t" style="left:1266px;top:640.50px;font-size:13px;line-height:17px;color:#111;-webkit-text-stroke:0.2px;letter-spacing:-0.507px;">Snow Kiss [OST D.Gray-M...</span>
<span class="t" style="left:1266px;top:659.70px;font-size:13px;line-height:17px;color:#8c9196;letter-spacing:-0.703px;">NIRGILIS</span>
<div class="sep" style="left:1201px;top:695px;width:230px"></div>
<span class="t" style="left:1216px;top:706.50px;font-size:13px;line-height:17px;color:#121212;letter-spacing:-0.225px;">Опрос</span>
<div class="a" style="left:1221px;top:740px;width:40px;height:40px;border-radius:50%;background:#e1e7ef"></div>
<svg width="20" height="20" style="left:1231px;top:750px" viewBox="0 0 20 20"><rect x="1.300" y="9.800" width="4" height="8" rx="1" fill="#94a9c6"/><rect x="8" y="1.500" width="4" height="16.300" rx="1" fill="#94a9c6"/><rect x="14.700" y="5.800" width="4" height="12" rx="1" fill="#94a9c6"/></svg>
<span class="t" style="left:1271px;top:740.30px;font-size:13px;line-height:17px;color:#555;letter-spacing:-0.453px;">*_*</span>
<span class="t" style="left:1271px;top:759.70px;font-size:13px;line-height:17px;color:#4e5a69;letter-spacing:-0.041px;">556 голосов</span>
<div class="sep" style="left:1201px;top:800px;width:230px"></div>
<span class="t" style="left:1216px;top:811.70px;font-size:13px;line-height:17px;color:#121212;letter-spacing:-0.256px;">Обсуждения</span>
<span class="t" style="left:1295px;top:811.70px;font-size:13px;line-height:17px;color:#939393;letter-spacing:-0.234px;">30</span>
<svg width="13" height="13" style="left:1216px;top:846.7px" viewBox="0 0 12 12"><path d="M0.500,0.500 h11 v7.500 h-7 l-2.500,2.500 v-2.500 h-1.500z" fill="#a3b6cf"/></svg>
<span class="t" style="left:1240px;top:842.70px;font-size:13px;line-height:17px;color:#3a536f;letter-spacing:-0.038px;">Книга отзывов, жалоб и</span>
<span class="t" style="left:1240px;top:859.70px;font-size:13px;line-height:17px;color:#3a536f;letter-spacing:-0.150px;">предложений</span>
<svg width="56" height="18" style="left:1336px;top:860px" viewBox="0 0 56 18"><g stroke="#3a536f" fill="none" stroke-width="1"><path d="M-12.400,13.700 H-0.800"/><circle cx="4.400" cy="10.800" r="2.500"/><path d="M6.200,9 L10.600,3.600 M7.600,3.400 H10.800 V6.600"/><path d="M15.300,3 C13,6.500 13,12 15.300,15.600"/><path d="M15.200,2.200 H28"/><path d="M29,8.300 H35.600"/><path d="M36.200,2.200 H49"/><path d="M52,3 C54.300,6.500 54.300,12 52,15.600"/></g></svg>
<span class="t" style="left:1240px;top:878.70px;font-size:13px;line-height:17px;color:#939393;letter-spacing:-0.211px;">13 мая в 16:06</span>
<span class="t" style="left:1240px;top:898.70px;font-size:13px;line-height:17px;color:#305582;letter-spacing:-0.073px;">12 комментариев</span>
<svg width="13" height="13" style="left:1216px;top:935.7px" viewBox="0 0 12 12"><path d="M0.500,0.500 h11 v7.500 h-7 l-2.500,2.500 v-2.500 h-1.500z" fill="#a3b6cf"/></svg>
<span class="t" style="left:1240px;top:931.70px;font-size:13px;line-height:17px;color:#3a536f;letter-spacing:-0.382px;">ЗАКАЗЫ :3</span>
<span class="t" style="left:1240px;top:950.70px;font-size:13px;line-height:17px;color:#939393;letter-spacing:-0.163px;">12 июн 2015</span>
<span class="t" style="left:1240px;top:970.70px;font-size:13px;line-height:17px;color:#305582;letter-spacing:-0.083px;">197 комментариев</span>
<svg width="13" height="13" style="left:1216px;top:1007.7px" viewBox="0 0 12 12"><path d="M0.500,0.500 h11 v7.500 h-7 l-2.500,2.500 v-2.500 h-1.500z" fill="#a3b6cf"/></svg>
<span class="t" style="left:1240px;top:1003.70px;font-size:13px;line-height:17px;color:#3a536f;letter-spacing:-0.142px;">Заказы. [Арты, музыка,</span>
<span class="t" style="left:1240px;top:1020.70px;font-size:13px;line-height:17px;color:#3a536f;letter-spacing:-0.234px;">гифки...]</span>
<div class="a" style="left:1841px;top:950px;width:52px;height:90px;background:#dfe4ec;border-radius:3px 3px 0 0"></div>
<div class="a" style="left:1847px;top:956px;width:40px;height:40px;border-radius:50%;background:#e6eaf0"></div>
<svg width="24" height="20" style="left:1855px;top:966px" viewBox="0 0 24 20"><path d="M8,1.500 h8 l1.500,2.500 h3.500 a1.500,1.500 0 0 1 1.500,1.500 v11 a1.500,1.500 0 0 1 -1.500,1.500 h-18 a1.500,1.500 0 0 1 -1.500,-1.500 v-11 a1.500,1.500 0 0 1 1.500,-1.500 h3.500z" fill="#9fb0c6"/><circle cx="12" cy="11" r="4.600" fill="#e6eaf0"/><circle cx="12" cy="11" r="2.700" fill="#9fb0c6"/></svg>
<span class="t" style="left:1854px;top:1011.75px;font-size:12.5px;line-height:16.5px;color:#8a99b0;font-weight:700;letter-spacing:-0.453px;">15</span>
<svg width="10" height="11" style="left:1870px;top:1014px" viewBox="0 0 10 11"><circle cx="5" cy="3" r="2.600" fill="#8ea0ba"/><path d="M0.300,11 c0,-3 2,-4.500 4.700,-4.500 c2.700,0 4.700,1.500 4.700,4.500z" fill="#8ea0ba"/></svg>
<div class="a" style="left:0;top:66px;width:1903px;height:42px;background:#4f7199"></div>
<div class="a" style="left:0;top:108px;width:1903px;height:1px;background:#f4f6f9"></div>
<svg width="35.2" height="19" preserveAspectRatio="none" style="left:470.2px;top:76.8px" viewBox="0 0 34 20"><path d="M17.9,19.2 C8.3,19.2 2.2,12.3 1.9,1 H6.9 C7.1,9.3 10.9,12.8 13.8,13.5 V1 H18.6 V8.2 C21.4,7.9 24.4,4.7 25.4,1 H30.1 C29.3,5.3 26.1,8.5 23.9,9.8 C26.1,10.9 29.8,13.7 31.2,19.2 H26 C24.9,15.7 22.2,13 18.6,12.6 V19.2 Z" fill="#fff" stroke="#fff" stroke-width="1.6" stroke-linejoin="round"/></svg>
<div class="a" style="left:636px;top:73px;width:230px;height:28px;border-radius:14px;background:#2d4d77"></div>
<svg width="16" height="16" style="left:643px;top:79px" viewBox="0 0 16 16"><circle cx="6.6" cy="6.6" r="4.6" stroke="#9db6d1" stroke-width="1.7" fill="none"/><path d="M10,10 L14,14" stroke="#9db6d1" stroke-width="2" stroke-linecap="round"/></svg>
<span class="t" style="left:664px;top:77.80px;font-size:13px;line-height:17px;color:#9db6d1;letter-spacing:0.394px;">Поиск</span>
<svg width="26" height="26" style="left:892px;top:72px" viewBox="0 0 26 26"><g transform="translate(0 1.8)"><path d="M11.500,5.500 c-3.600,0 -5.200,2.700 -5.200,5.800 c0,3.300 -0.600,4.700 -2.400,6.500 c-0.400,0.400 -0.100,1.200 0.500,1.200 h14.200 c0.600,0 0.900,-0.800 0.500,-1.200 c-1.800,-1.800 -2.400,-3.200 -2.400,-6.500 c0,-3.100 -1.600,-5.800 -5.200,-5.800z" fill="#fff"/><path d="M9.200,20.200 a2.400,2.400 0 0 0 4.600,0z" fill="#fff"/></g><circle cx="18.600" cy="8.300" r="6.700" fill="#f2683a" stroke="#4f7199" stroke-width="1.200"/><text x="18.600" y="11.700" font-size="9.500" font-weight="700" fill="#fff" text-anchor="middle" font-family="Liberation Sans">1</text></svg>
<svg width="20" height="20" style="left:940px;top:77px" viewBox="0 0 20 20"><path d="M6.5,4.2 L17.5,1.8 V14 a2.8,2.5 0 1 1 -1.8,-2.3 V5.6 L8.3,7.2 V16 a2.8,2.5 0 1 1 -1.8,-2.3 z" fill="#1e3f6b"/></svg>
<span class="t" style="left:1332px;top:78.50px;font-size:13px;line-height:17px;color:#fff;font-weight:700;letter-spacing:-0.353px;">Марат</span>
<svg width="28.4" height="28.4" style="left:1379.8px;top:72.8px" viewBox="0 0 34 34"><defs><clipPath id="av137972"><circle cx="17" cy="17" r="17"/></clipPath><filter id="av137972f"><feGaussianBlur stdDeviation="0.9"/></filter></defs><g clip-path="url(#av137972)"><rect width="34" height="34" fill="#121214"/><g filter="url(#av137972f)"><ellipse cx="14.500" cy="12" rx="6.200" ry="8" fill="#858587"/><ellipse cx="16" cy="8" rx="4.500" ry="3" fill="#9a9a9c"/><path d="M7,9 C9,2 22,1 24,9 L22,7 C18,5 12,5 9,8Z" fill="#1a1a1c"/><ellipse cx="11" cy="11.300" rx="1.700" ry="1" fill="#202022"/><ellipse cx="17" cy="11" rx="1.800" ry="1" fill="#202022"/><ellipse cx="13.500" cy="16" rx="1.300" ry="1.600" fill="#3a3a3c"/><ellipse cx="7" cy="14" rx="2.800" ry="1.500" fill="#b8b8ba"/><ellipse cx="9.500" cy="17.500" rx="2" ry="1.500" fill="#c4c4c6"/><ellipse cx="2.500" cy="14" rx="1.800" ry="0.800" fill="#d0d0d2"/><ellipse cx="27.500" cy="10" rx="2" ry="1.500" fill="#b0b0b2"/><ellipse cx="27" cy="18" rx="4" ry="1.800" fill="#6a6a6c"/><ellipse cx="23" cy="8" rx="1" ry="2.500" fill="#707072"/><path d="M2,22 C8,18 12,20 15,22 C20,19 28,20 33,24 L34,34 L0,34Z" fill="#0c0c0e"/></g></g></svg>
<svg width="8" height="5" style="left:1415px;top:85.5px" viewBox="0 0 8 5"><path d="M0,0 h8 l-4,4.5z" fill="#8fadc8"/></svg>
<div class="a" style="left:0;top:0;width:1919px;height:29px;background:linear-gradient(180deg,#efe6c0 0,#efe6c0 2px,#fff 3px)"></div>
<div class="a" style="left:0;top:29px;width:1919px;height:37px;background:#f2f2f2"></div>
<div class="a" style="left:0;top:65px;width:1919px;height:1px;background:#b6b6b6"></div>
<svg width="1919" height="30" style="left:0;top:0" viewBox="0 0 1919 30"><path d="M1570.9,28.5 L1582.5,4 Q1583.3,2.5 1584.9,2.5 L1650.1,2.5 Q1651.7,2.5 1652.5,4 L1664.1,28.5" fill="#dcdcdc" stroke="#bababa" stroke-width="1"/><path d="M1490.9,28.5 L1502.5,4 Q1503.3,2.5 1504.9,2.5 L1570.1,2.5 Q1571.7,2.5 1572.5,4 L1584.1,28.5" fill="#dcdcdc" stroke="#bababa" stroke-width="1"/><path d="M1410.9,28.5 L1422.5,4 Q1423.3,2.5 1424.9,2.5 L1490.1,2.5 Q1491.7,2.5 1492.5,4 L1504.1,28.5" fill="#dcdcdc" stroke="#bababa" stroke-width="1"/><path d="M1330.9,28.5 L1342.5,4 Q1343.3,2.5 1344.9,2.5 L1410.1,2.5 Q1411.7,2.5 1412.5,4 L1424.1,28.5" fill="#dcdcdc" stroke="#bababa" stroke-width="1"/><path d="M1250.9,28.5 L1262.5,4 Q1263.3,2.5 1264.9,2.5 L1330.1,2.5 Q1331.7,2.5 1332.5,4 L1344.1,28.5" fill="#dcdcdc" stroke="#bababa" stroke-width="1"/><path d="M1170.9,28.5 L1182.5,4 Q1183.3,2.5 1184.9,2.5 L1250.1,2.5 Q1251.7,2.5 1252.5,4 L1264.1,28.5" fill="#dcdcdc" stroke="#bababa" stroke-width="1"/><path d="M1090.9,28.5 L1102.5,4 Q1103.3,2.5 1104.9,2.5 L1170.1,2.5 Q1171.7,2.5 1172.5,4 L1184.1,28.5" fill="#dcdcdc" stroke="#bababa" stroke-width="1"/><path d="M1010.9,28.5 L1022.5,4 Q1023.3,2.5 1024.9,2.5 L1090.1,2.5 Q1091.7,2.5 1092.5,4 L1104.1,28.5" fill="#dcdcdc" stroke="#bababa" stroke-width="1"/><path d="M850.6,28.5 L862.2,4 Q863.0,2.5 864.6,2.5 L929.8,2.5 Q931.4,2.5 932.2,4 L943.8,28.5" fill="#dcdcdc" stroke="#bababa" stroke-width="1"/><path d="M770.3,28.5 L781.9,4 Q782.7,2.5 784.3,2.5 L849.5,2.5 Q851.1,2.5 851.9,4 L863.5,28.5" fill="#dcdcdc" stroke="#bababa" stroke-width="1"/><path d="M690.0,28.5 L701.6,4 Q702.4,2.5 704.0,2.5 L769.2,2.5 Q770.8,2.5 771.6,4 L783.2,28.5" fill="#dcdcdc" stroke="#bababa" stroke-width="1"/><path d="M609.7,28.5 L621.3,4 Q622.1,2.5 623.7,2.5 L688.9,2.5 Q690.5,2.5 691.3,4 L702.9,28.5" fill="#dcdcdc" stroke="#bababa" stroke-width="1"/><path d="M529.4,28.5 L541.0,4 Q541.8,2.5 543.4,2.5 L608.6,2.5 Q610.2,2.5 611.0,4 L622.6,28.5" fill="#dcdcdc" stroke="#bababa" stroke-width="1"/><path d="M449.1,28.5 L460.7,4 Q461.4,2.5 463.1,2.5 L528.2,2.5 Q529.9,2.5 530.6,4 L542.2,28.5" fill="#dcdcdc" stroke="#bababa" stroke-width="1"/><path d="M368.7,28.5 L380.3,4 Q381.1,2.5 382.7,2.5 L447.9,2.5 Q449.5,2.5 450.3,4 L461.9,28.5" fill="#dcdcdc" stroke="#bababa" stroke-width="1"/><path d="M288.4,28.5 L300.0,4 Q300.8,2.5 302.4,2.5 L367.6,2.5 Q369.2,2.5 370.0,4 L381.6,28.5" fill="#dcdcdc" stroke="#bababa" stroke-width="1"/><path d="M208.1,28.5 L219.7,4 Q220.5,2.5 222.1,2.5 L287.3,2.5 Q288.9,2.5 289.7,4 L301.3,28.5" fill="#dcdcdc" stroke="#bababa" stroke-width="1"/><path d="M127.8,28.5 L139.4,4 Q140.2,2.5 141.8,2.5 L207.0,2.5 Q208.6,2.5 209.4,4 L221.0,28.5" fill="#dcdcdc" stroke="#bababa" stroke-width="1"/><path d="M47.5,28.5 L59.1,4 Q59.9,2.5 61.5,2.5 L126.7,2.5 Q128.3,2.5 129.1,4 L140.7,28.5" fill="#dcdcdc" stroke="#bababa" stroke-width="1"/><path d="M5.5,28.5 L17.1,4 Q17.9,2.5 19.5,2.5 L43.0,2.5 Q44.6,2.5 45.4,4 L57.0,28.5" fill="#dcdcdc" stroke="#bababa" stroke-width="1"/><path d="M1664.5,7.5 h24 q1.5,0 2.2,1.5 l6,12.5 q0.7,1.8 -1,1.8 h-24 q-1.5,0 -2.2,-1.5 l-6,-12.5 q-0.7,-1.8 1,-1.8 z" fill="#dcdcdc" stroke="#d0d0d0" stroke-width="0.6"/><rect x="0" y="28" width="1919" height="1" fill="#b0b0b0"/><path d="M930.9,28.5 L942.5,4 Q943.3,2.5 944.9,2.5 L1010.1,2.5 Q1011.7,2.5 1012.5,4 L1024.1,28.5 L1024.1,30 L930.9,30 Z" fill="#f2f2f2" stroke="none"/><path d="M930.9,28.5 L942.5,4 Q943.3,2.5 944.9,2.5 L1010.1,2.5 Q1011.7,2.5 1012.5,4 L1024.1,28.5" fill="none" stroke="#a9a9a9" stroke-width="1"/><path d="M26.5,13.2 h2.2 l3.3,-3 v10.6 l-3.3,-3 h-2.2 z" fill="#5a5a5a"/><rect x="33.3" y="11.5" width="1" height="7" fill="#6a6a6a"/><rect x="35.2" y="12.5" width="0.9" height="5" fill="#8a8a8a"/></svg>
<svg width="16" height="16" style="left:64px;top:7px" viewBox="0 0 16 16"><defs><linearGradient id="eg64" x1="0" y1="0" x2="0" y2="1"><stop offset="0" stop-color="#a5c2dc"/><stop offset=".35" stop-color="#5f88b8"/><stop offset="1" stop-color="#2f4f88"/></linearGradient></defs><rect width="16" height="16" rx="2" fill="url(#eg64)"/><path d="M8,2.200 c1,0 1.500,0.800 2.500,0.600 c1.500,-0.300 2.300,0.400 2.700,1.200 c0.600,1.500 0.200,3.800 -1.200,5 l1.300,1.200 l-2.300,0.400 c-0.400,1.600 -1.500,2.900 -3,3.200 c-1.500,-0.300 -2.600,-1.600 -3,-3.200 l-2.300,-0.400 l1.300,-1.200 C2.600,7.800 2.200,5.500 2.800,4 c0.400,-0.800 1.200,-1.500 2.700,-1.200 c1,0.200 1.500,-0.600 2.500,-0.600z" fill="#f0a820"/><path d="M5.500,4 c1,0.500 1.700,1.500 2.500,1.500 c0.800,0 1.500,-1 2.500,-1.500 c0.500,1.500 0,3 -1,4 c-0.500,0.500 -1,0.800 -1.500,0.800 c-0.500,0 -1,-0.300 -1.500,-0.800 c-1,-1 -1.500,-2.500 -1,-4z" fill="#f9c83a"/><ellipse cx="8" cy="11.200" rx="2.300" ry="2" fill="#f7d24c"/><circle cx="6.300" cy="5.300" r="0.700" fill="#9a4a10"/><circle cx="9.700" cy="5.300" r="0.700" fill="#9a4a10"/></svg>
<div class="a" style="left:86.7px;top:6px;width:20px;height:18px;overflow:hidden;-webkit-mask-image:linear-gradient(90deg,#000 60%,transparent 97%);mask-image:linear-gradient(90deg,#000 60%,transparent 97%)"><span style="position:absolute;left:0;top:1px;font-size:12px;line-height:16px;color:#555;white-space:nowrap;letter-spacing:-0.2px">Фор</span></div>
<svg width="8" height="8" style="left:115.3px;top:11px" viewBox="0 0 8 8"><path d="M0.6,0.6 L7.4,7.4 M7.4,0.6 L0.6,7.4" stroke="#6a6a6a" stroke-width="1.35" fill="none"/></svg>
<svg width="16" height="16" style="left:145px;top:7px" viewBox="0 0 16 16"><rect width="16" height="16" rx="2.2" fill="#6d8fbb"/><path transform="translate(8 8.5) scale(1.14) translate(-8 -8.5)" d="M8.3,11.2 C5.3,11.2 3.6,9.2 3.5,5.8 h1.5 c0.05,2.5 1.1,3.5 1.95,3.7 V5.8 h1.4 v2.1 c0.85,-0.1 1.75,-1.05 2.05,-2.1 h1.4 c-0.25,1.3 -1.2,2.25 -1.9,2.65 c0.7,0.3 1.8,1.15 2.2,2.75 h-1.55 c-0.35,-1.05 -1.15,-1.85 -2.2,-1.95 v1.95 z" fill="#fff"/></svg>
<div class="a" style="left:167.0px;top:6px;width:20px;height:18px;overflow:hidden;-webkit-mask-image:linear-gradient(90deg,#000 60%,transparent 97%);mask-image:linear-gradient(90deg,#000 60%,transparent 97%)"><span style="position:absolute;left:0;top:1px;font-size:12px;line-height:16px;color:#555;white-space:nowrap;letter-spacing:-0.2px">WG</span></div>
<svg width="8" height="8" style="left:195.6px;top:11px" viewBox="0 0 8 8"><path d="M0.6,0.6 L7.4,7.4 M7.4,0.6 L0.6,7.4" stroke="#6a6a6a" stroke-width="1.35" fill="none"/></svg>
<svg width="16" height="16" style="left:225px;top:7px" viewBox="0 0 16 16"><rect width="16" height="16" rx="2.2" fill="#6d8fbb"/><path transform="translate(8 8.5) scale(1.14) translate(-8 -8.5)" d="M8.3,11.2 C5.3,11.2 3.6,9.2 3.5,5.8 h1.5 c0.05,2.5 1.1,3.5 1.95,3.7 V5.8 h1.4 v2.1 c0.85,-0.1 1.75,-1.05 2.05,-2.1 h1.4 c-0.25,1.3 -1.2,2.25 -1.9,2.65 c0.7,0.3 1.8,1.15 2.2,2.75 h-1.55 c-0.35,-1.05 -1.15,-1.85 -2.2,-1.95 v1.95 z" fill="#fff"/></svg>
<div class="a" style="left:247.3px;top:6px;width:20px;height:18px;overflow:hidden;-webkit-mask-image:linear-gradient(90deg,#000 60%,transparent 97%);mask-image:linear-gradient(90deg,#000 60%,transparent 97%)"><span style="position:absolute;left:0;top:1px;font-size:12px;line-height:16px;color:#555;white-space:nowrap;letter-spacing:-0.2px">Wo</span></div>
<svg width="8" height="8" style="left:275.9px;top:11px" viewBox="0 0 8 8"><path d="M0.6,0.6 L7.4,7.4 M7.4,0.6 L0.6,7.4" stroke="#6a6a6a" stroke-width="1.35" fill="none"/></svg>
<svg width="16" height="16" style="left:305px;top:7px" viewBox="0 0 16 16"><rect width="16" height="16" rx="2.2" fill="#6d8fbb"/><path transform="translate(8 8.5) scale(1.14) translate(-8 -8.5)" d="M8.3,11.2 C5.3,11.2 3.6,9.2 3.5,5.8 h1.5 c0.05,2.5 1.1,3.5 1.95,3.7 V5.8 h1.4 v2.1 c0.85,-0.1 1.75,-1.05 2.05,-2.1 h1.4 c-0.25,1.3 -1.2,2.25 -1.9,2.65 c0.7,0.3 1.8,1.15 2.2,2.75 h-1.55 c-0.35,-1.05 -1.15,-1.85 -2.2,-1.95 v1.95 z" fill="#fff"/></svg>
<div class="a" style="left:327.6px;top:6px;width:20px;height:18px;overflow:hidden;-webkit-mask-image:linear-gradient(90deg,#000 60%,transparent 97%);mask-image:linear-gradient(90deg,#000 60%,transparent 97%)"><span style="position:absolute;left:0;top:1px;font-size:12px;line-height:16px;color:#555;white-space:nowrap;letter-spacing:-0.2px">Lea</span></div>
<svg width="8" height="8" style="left:356.2px;top:11px" viewBox="0 0 8 8"><path d="M0.6,0.6 L7.4,7.4 M7.4,0.6 L0.6,7.4" stroke="#6a6a6a" stroke-width="1.35" fill="none"/></svg>
<svg width="16" height="16" style="left:386px;top:7px" viewBox="0 0 16 16"><rect width="16" height="16" rx="2.2" fill="#6d8fbb"/><path transform="translate(8 8.5) scale(1.14) translate(-8 -8.5)" d="M8.3,11.2 C5.3,11.2 3.6,9.2 3.5,5.8 h1.5 c0.05,2.5 1.1,3.5 1.95,3.7 V5.8 h1.4 v2.1 c0.85,-0.1 1.75,-1.05 2.05,-2.1 h1.4 c-0.25,1.3 -1.2,2.25 -1.9,2.65 c0.7,0.3 1.8,1.15 2.2,2.75 h-1.55 c-0.35,-1.05 -1.15,-1.85 -2.2,-1.95 v1.95 z" fill="#fff"/></svg>
<div class="a" style="left:407.9px;top:6px;width:20px;height:18px;overflow:hidden;-webkit-mask-image:linear-gradient(90deg,#000 60%,transparent 97%);mask-image:linear-gradient(90deg,#000 60%,transparent 97%)"><span style="position:absolute;left:0;top:1px;font-size:12px;line-height:16px;color:#555;white-space:nowrap;letter-spacing:-0.2px">Fee</span></div>
<svg width="8" height="8" style="left:436.5px;top:11px" viewBox="0 0 8 8"><path d="M0.6,0.6 L7.4,7.4 M7.4,0.6 L0.6,7.4" stroke="#6a6a6a" stroke-width="1.35" fill="none"/></svg>
<svg width="16" height="16" style="left:466px;top:7px" viewBox="0 0 16 16"><rect width="16" height="16" rx="2.2" fill="#6d8fbb"/><path transform="translate(8 8.5) scale(1.14) translate(-8 -8.5)" d="M8.3,11.2 C5.3,11.2 3.6,9.2 3.5,5.8 h1.5 c0.05,2.5 1.1,3.5 1.95,3.7 V5.8 h1.4 v2.1 c0.85,-0.1 1.75,-1.05 2.05,-2.1 h1.4 c-0.25,1.3 -1.2,2.25 -1.9,2.65 c0.7,0.3 1.8,1.15 2.2,2.75 h-1.55 c-0.35,-1.05 -1.15,-1.85 -2.2,-1.95 v1.95 z" fill="#fff"/></svg>
<div class="a" style="left:488.2px;top:6px;width:20px;height:18px;overflow:hidden;-webkit-mask-image:linear-gradient(90deg,#000 60%,transparent 97%);mask-image:linear-gradient(90deg,#000 60%,transparent 97%)"><span style="position:absolute;left:0;top:1px;font-size:12px;line-height:16px;color:#555;white-space:nowrap;letter-spacing:-0.2px">GAI</span></div>
<svg width="8" height="8" style="left:516.9px;top:11px" viewBox="0 0 8 8"><path d="M0.6,0.6 L7.4,7.4 M7.4,0.6 L0.6,7.4" stroke="#6a6a6a" stroke-width="1.35" fill="none"/></svg>
<svg width="16" height="16" style="left:546px;top:7px" viewBox="0 0 16 16"><rect width="16" height="16" rx="2.2" fill="#6d8fbb"/><path transform="translate(8 8.5) scale(1.14) translate(-8 -8.5)" d="M8.3,11.2 C5.3,11.2 3.6,9.2 3.5,5.8 h1.5 c0.05,2.5 1.1,3.5 1.95,3.7 V5.8 h1.4 v2.1 c0.85,-0.1 1.75,-1.05 2.05,-2.1 h1.4 c-0.25,1.3 -1.2,2.25 -1.9,2.65 c0.7,0.3 1.8,1.15 2.2,2.75 h-1.55 c-0.35,-1.05 -1.15,-1.85 -2.2,-1.95 v1.95 z" fill="#fff"/></svg>
<div class="a" style="left:568.6px;top:6px;width:20px;height:18px;overflow:hidden;-webkit-mask-image:linear-gradient(90deg,#000 60%,transparent 97%);mask-image:linear-gradient(90deg,#000 60%,transparent 97%)"><span style="position:absolute;left:0;top:1px;font-size:12px;line-height:16px;color:#555;white-space:nowrap;letter-spacing:-0.2px">Wo</span></div>
<svg width="8" height="8" style="left:597.2px;top:11px" viewBox="0 0 8 8"><path d="M0.6,0.6 L7.4,7.4 M7.4,0.6 L0.6,7.4" stroke="#6a6a6a" stroke-width="1.35" fill="none"/></svg>
<svg width="16" height="16" style="left:627px;top:7px" viewBox="0 0 16 16"><rect width="16" height="16" rx="2.2" fill="#6d8fbb"/><path transform="translate(8 8.5) scale(1.14) translate(-8 -8.5)" d="M8.3,11.2 C5.3,11.2 3.6,9.2 3.5,5.8 h1.5 c0.05,2.5 1.1,3.5 1.95,3.7 V5.8 h1.4 v2.1 c0.85,-0.1 1.75,-1.05 2.05,-2.1 h1.4 c-0.25,1.3 -1.2,2.25 -1.9,2.65 c0.7,0.3 1.8,1.15 2.2,2.75 h-1.55 c-0.35,-1.05 -1.15,-1.85 -2.2,-1.95 v1.95 z" fill="#fff"/></svg>
<div class="a" style="left:648.9px;top:6px;width:20px;height:18px;overflow:hidden;-webkit-mask-image:linear-gradient(90deg,#000 60%,transparent 97%);mask-image:linear-gradient(90deg,#000 60%,transparent 97%)"><span style="position:absolute;left:0;top:1px;font-size:12px;line-height:16px;color:#555;white-space:nowrap;letter-spacing:-0.2px">Perf</span></div>
<svg width="8" height="8" style="left:677.5px;top:11px" viewBox="0 0 8 8"><path d="M0.6,0.6 L7.4,7.4 M7.4,0.6 L0.6,7.4" stroke="#6a6a6a" stroke-width="1.35" fill="none"/></svg>
<svg width="16" height="16" style="left:707px;top:7px" viewBox="0 0 16 16"><rect width="16" height="16" rx="2.2" fill="#6d8fbb"/><path transform="translate(8 8.5) scale(1.14) translate(-8 -8.5)" d="M8.3,11.2 C5.3,11.2 3.6,9.2 3.5,5.8 h1.5 c0.05,2.5 1.1,3.5 1.95,3.7 V5.8 h1.4 v2.1 c0.85,-0.1 1.75,-1.05 2.05,-2.1 h1.4 c-0.25,1.3 -1.2,2.25 -1.9,2.65 c0.7,0.3 1.8,1.15 2.2,2.75 h-1.55 c-0.35,-1.05 -1.15,-1.85 -2.2,-1.95 v1.95 z" fill="#fff"/></svg>
<div class="a" style="left:729.2px;top:6px;width:20px;height:18px;overflow:hidden;-webkit-mask-image:linear-gradient(90deg,#000 60%,transparent 97%);mask-image:linear-gradient(90deg,#000 60%,transparent 97%)"><span style="position:absolute;left:0;top:1px;font-size:12px;line-height:16px;color:#555;white-space:nowrap;letter-spacing:-0.2px">GAI</span></div>
<svg width="8" height="8" style="left:757.8px;top:11px" viewBox="0 0 8 8"><path d="M0.6,0.6 L7.4,7.4 M7.4,0.6 L0.6,7.4" stroke="#6a6a6a" stroke-width="1.35" fill="none"/></svg>
<svg width="16" height="16" style="left:787px;top:7px" viewBox="0 0 16 16"><rect width="16" height="16" rx="2.2" fill="#6d8fbb"/><path transform="translate(8 8.5) scale(1.14) translate(-8 -8.5)" d="M8.3,11.2 C5.3,11.2 3.6,9.2 3.5,5.8 h1.5 c0.05,2.5 1.1,3.5 1.95,3.7 V5.8 h1.4 v2.1 c0.85,-0.1 1.75,-1.05 2.05,-2.1 h1.4 c-0.25,1.3 -1.2,2.25 -1.9,2.65 c0.7,0.3 1.8,1.15 2.2,2.75 h-1.55 c-0.35,-1.05 -1.15,-1.85 -2.2,-1.95 v1.95 z" fill="#fff"/></svg>
<div class="a" style="left:809.5px;top:6px;width:20px;height:18px;overflow:hidden;-webkit-mask-image:linear-gradient(90deg,#000 60%,transparent 97%);mask-image:linear-gradient(90deg,#000 60%,transparent 97%)"><span style="position:absolute;left:0;top:1px;font-size:12px;line-height:16px;color:#555;white-space:nowrap;letter-spacing:-0.2px">MM</span></div>
<svg width="8" height="8" style="left:838.1px;top:11px" viewBox="0 0 8 8"><path d="M0.6,0.6 L7.4,7.4 M7.4,0.6 L0.6,7.4" stroke="#6a6a6a" stroke-width="1.35" fill="none"/></svg>
<svg width="16" height="16" style="left:868px;top:7px" viewBox="0 0 16 16"><rect width="16" height="16" rx="2.2" fill="#6d8fbb"/><path transform="translate(8 8.5) scale(1.14) translate(-8 -8.5)" d="M8.3,11.2 C5.3,11.2 3.6,9.2 3.5,5.8 h1.5 c0.05,2.5 1.1,3.5 1.95,3.7 V5.8 h1.4 v2.1 c0.85,-0.1 1.75,-1.05 2.05,-2.1 h1.4 c-0.25,1.3 -1.2,2.25 -1.9,2.65 c0.7,0.3 1.8,1.15 2.2,2.75 h-1.55 c-0.35,-1.05 -1.15,-1.85 -2.2,-1.95 v1.95 z" fill="#fff"/></svg>
<div class="a" style="left:889.8px;top:6px;width:20px;height:18px;overflow:hidden;-webkit-mask-image:linear-gradient(90deg,#000 60%,transparent 97%);mask-image:linear-gradient(90deg,#000 60%,transparent 97%)"><span style="position:absolute;left:0;top:1px;font-size:12px;line-height:16px;color:#555;white-space:nowrap;letter-spacing:-0.2px">MM</span></div>
<svg width="8" height="8" style="left:918.4px;top:11px" viewBox="0 0 8 8"><path d="M0.6,0.6 L7.4,7.4 M7.4,0.6 L0.6,7.4" stroke="#6a6a6a" stroke-width="1.35" fill="none"/></svg>
<svg width="16" height="16" style="left:948px;top:7px" viewBox="0 0 16 16"><rect width="16" height="16" rx="2.2" fill="#5181b8"/><path transform="translate(8 8.5) scale(1.14) translate(-8 -8.5)" d="M8.3,11.2 C5.3,11.2 3.6,9.2 3.5,5.8 h1.5 c0.05,2.5 1.1,3.5 1.95,3.7 V5.8 h1.4 v2.1 c0.85,-0.1 1.75,-1.05 2.05,-2.1 h1.4 c-0.25,1.3 -1.2,2.25 -1.9,2.65 c0.7,0.3 1.8,1.15 2.2,2.75 h-1.55 c-0.35,-1.05 -1.15,-1.85 -2.2,-1.95 v1.95 z" fill="#fff"/></svg>
<div class="a" style="left:970.1px;top:6px;width:20px;height:18px;overflow:hidden;-webkit-mask-image:linear-gradient(90deg,#000 60%,transparent 97%);mask-image:linear-gradient(90deg,#000 60%,transparent 97%)"><span style="position:absolute;left:0;top:1px;font-size:12px;line-height:16px;color:#1a1a1a;white-space:nowrap;letter-spacing:-0.2px">*Ид</span></div>
<svg width="8" height="8" style="left:998.7px;top:11px" viewBox="0 0 8 8"><path d="M0.6,0.6 L7.4,7.4 M7.4,0.6 L0.6,7.4" stroke="#454545" stroke-width="1.35" fill="none"/></svg>
<svg width="16" height="16" style="left:1028px;top:7px" viewBox="0 0 16 16"><rect width="16" height="16" rx="2.2" fill="#6d8fbb"/><path transform="translate(8 8.5) scale(1.14) translate(-8 -8.5)" d="M8.3,11.2 C5.3,11.2 3.6,9.2 3.5,5.8 h1.5 c0.05,2.5 1.1,3.5 1.95,3.7 V5.8 h1.4 v2.1 c0.85,-0.1 1.75,-1.05 2.05,-2.1 h1.4 c-0.25,1.3 -1.2,2.25 -1.9,2.65 c0.7,0.3 1.8,1.15 2.2,2.75 h-1.55 c-0.35,-1.05 -1.15,-1.85 -2.2,-1.95 v1.95 z" fill="#fff"/></svg>
<div class="a" style="left:1050.1px;top:6px;width:20px;height:18px;overflow:hidden;-webkit-mask-image:linear-gradient(90deg,#000 60%,transparent 97%);mask-image:linear-gradient(90deg,#000 60%,transparent 97%)"><span style="position:absolute;left:0;top:1px;font-size:12px;line-height:16px;color:#555;white-space:nowrap;letter-spacing:-0.2px">You</span></div>
<svg width="8" height="8" style="left:1078.7px;top:11px" viewBox="0 0 8 8"><path d="M0.6,0.6 L7.4,7.4 M7.4,0.6 L0.6,7.4" stroke="#6a6a6a" stroke-width="1.35" fill="none"/></svg>
<svg width="16" height="16" style="left:1108px;top:7px" viewBox="0 0 16 16"><rect width="16" height="16" rx="2.2" fill="#6d8fbb"/><path transform="translate(8 8.5) scale(1.14) translate(-8 -8.5)" d="M8.3,11.2 C5.3,11.2 3.6,9.2 3.5,5.8 h1.5 c0.05,2.5 1.1,3.5 1.95,3.7 V5.8 h1.4 v2.1 c0.85,-0.1 1.75,-1.05 2.05,-2.1 h1.4 c-0.25,1.3 -1.2,2.25 -1.9,2.65 c0.7,0.3 1.8,1.15 2.2,2.75 h-1.55 c-0.35,-1.05 -1.15,-1.85 -2.2,-1.95 v1.95 z" fill="#fff"/></svg>
<div class="a" style="left:1130.1px;top:6px;width:20px;height:18px;overflow:hidden;-webkit-mask-image:linear-gradient(90deg,#000 60%,transparent 97%);mask-image:linear-gradient(90deg,#000 60%,transparent 97%)"><span style="position:absolute;left:0;top:1px;font-size:12px;line-height:16px;color:#555;white-space:nowrap;letter-spacing:-0.2px">MM</span></div>
<svg width="8" height="8" style="left:1158.7px;top:11px" viewBox="0 0 8 8"><path d="M0.6,0.6 L7.4,7.4 M7.4,0.6 L0.6,7.4" stroke="#6a6a6a" stroke-width="1.35" fill="none"/></svg>
<svg width="16" height="16" style="left:1188px;top:7px" viewBox="0 0 16 16"><rect width="16" height="16" rx="2.2" fill="#6d8fbb"/><path transform="translate(8 8.5) scale(1.14) translate(-8 -8.5)" d="M8.3,11.2 C5.3,11.2 3.6,9.2 3.5,5.8 h1.5 c0.05,2.5 1.1,3.5 1.95,3.7 V5.8 h1.4 v2.1 c0.85,-0.1 1.75,-1.05 2.05,-2.1 h1.4 c-0.25,1.3 -1.2,2.25 -1.9,2.65 c0.7,0.3 1.8,1.15 2.2,2.75 h-1.55 c-0.35,-1.05 -1.15,-1.85 -2.2,-1.95 v1.95 z" fill="#fff"/></svg>
<div class="a" style="left:1210.1px;top:6px;width:20px;height:18px;overflow:hidden;-webkit-mask-image:linear-gradient(90deg,#000 60%,transparent 97%);mask-image:linear-gradient(90deg,#000 60%,transparent 97%)"><span style="position:absolute;left:0;top:1px;font-size:12px;line-height:16px;color:#555;white-space:nowrap;letter-spacing:-0.2px">VK</span></div>
<svg width="8" height="8" style="left:1238.7px;top:11px" viewBox="0 0 8 8"><path d="M0.6,0.6 L7.4,7.4 M7.4,0.6 L0.6,7.4" stroke="#6a6a6a" stroke-width="1.35" fill="none"/></svg>
<svg width="16" height="16" style="left:1268px;top:7px" viewBox="0 0 16 16"><rect width="16" height="16" rx="2.2" fill="#6d8fbb"/><path transform="translate(8 8.5) scale(1.14) translate(-8 -8.5)" d="M8.3,11.2 C5.3,11.2 3.6,9.2 3.5,5.8 h1.5 c0.05,2.5 1.1,3.5 1.95,3.7 V5.8 h1.4 v2.1 c0.85,-0.1 1.75,-1.05 2.05,-2.1 h1.4 c-0.25,1.3 -1.2,2.25 -1.9,2.65 c0.7,0.3 1.8,1.15 2.2,2.75 h-1.55 c-0.35,-1.05 -1.15,-1.85 -2.2,-1.95 v1.95 z" fill="#fff"/></svg>
<div class="a" style="left:1290.1px;top:6px;width:20px;height:18px;overflow:hidden;-webkit-mask-image:linear-gradient(90deg,#000 60%,transparent 97%);mask-image:linear-gradient(90deg,#000 60%,transparent 97%)"><span style="position:absolute;left:0;top:1px;font-size:12px;line-height:16px;color:#555;white-space:nowrap;letter-spacing:-0.2px">Qua</span></div>
<svg width="8" height="8" style="left:1318.7px;top:11px" viewBox="0 0 8 8"><path d="M0.6,0.6 L7.4,7.4 M7.4,0.6 L0.6,7.4" stroke="#6a6a6a" stroke-width="1.35" fill="none"/></svg>
<svg width="16" height="16" style="left:1348px;top:7px" viewBox="0 0 16 16"><rect width="16" height="16" rx="2.2" fill="#6d8fbb"/><path transform="translate(8 8.5) scale(1.14) translate(-8 -8.5)" d="M8.3,11.2 C5.3,11.2 3.6,9.2 3.5,5.8 h1.5 c0.05,2.5 1.1,3.5 1.95,3.7 V5.8 h1.4 v2.1 c0.85,-0.1 1.75,-1.05 2.05,-2.1 h1.4 c-0.25,1.3 -1.2,2.25 -1.9,2.65 c0.7,0.3 1.8,1.15 2.2,2.75 h-1.55 c-0.35,-1.05 -1.15,-1.85 -2.2,-1.95 v1.95 z" fill="#fff"/></svg>
<div class="a" style="left:1370.1px;top:6px;width:20px;height:18px;overflow:hidden;-webkit-mask-image:linear-gradient(90deg,#000 60%,transparent 97%);mask-image:linear-gradient(90deg,#000 60%,transparent 97%)"><span style="position:absolute;left:0;top:1px;font-size:12px;line-height:16px;color:#555;white-space:nowrap;letter-spacing:-0.2px">Бес</span></div>
<svg width="8" height="8" style="left:1398.7px;top:11px" viewBox="0 0 8 8"><path d="M0.6,0.6 L7.4,7.4 M7.4,0.6 L0.6,7.4" stroke="#6a6a6a" stroke-width="1.35" fill="none"/></svg>
<svg width="16" height="16" style="left:1428px;top:7px" viewBox="0 0 16 16"><defs><linearGradient id="eg1428" x1="0" y1="0" x2="0" y2="1"><stop offset="0" stop-color="#a5c2dc"/><stop offset=".35" stop-color="#5f88b8"/><stop offset="1" stop-color="#2f4f88"/></linearGradient></defs><rect width="16" height="16" rx="2" fill="url(#eg1428)"/><path d="M8,2.200 c1,0 1.500,0.800 2.500,0.600 c1.500,-0.300 2.300,0.400 2.700,1.200 c0.600,1.500 0.200,3.800 -1.200,5 l1.300,1.200 l-2.300,0.400 c-0.400,1.600 -1.500,2.900 -3,3.200 c-1.500,-0.300 -2.600,-1.600 -3,-3.200 l-2.300,-0.400 l1.300,-1.200 C2.600,7.800 2.200,5.500 2.800,4 c0.400,-0.800 1.200,-1.500 2.700,-1.200 c1,0.200 1.500,-0.600 2.500,-0.600z" fill="#f0a820"/><path d="M5.500,4 c1,0.500 1.700,1.500 2.500,1.500 c0.800,0 1.500,-1 2.500,-1.500 c0.500,1.500 0,3 -1,4 c-0.500,0.500 -1,0.800 -1.500,0.800 c-0.500,0 -1,-0.300 -1.500,-0.800 c-1,-1 -1.500,-2.500 -1,-4z" fill="#f9c83a"/><ellipse cx="8" cy="11.200" rx="2.300" ry="2" fill="#f7d24c"/><circle cx="6.300" cy="5.300" r="0.700" fill="#9a4a10"/><circle cx="9.700" cy="5.300" r="0.700" fill="#9a4a10"/></svg>
<div class="a" style="left:1450.1px;top:6px;width:20px;height:18px;overflow:hidden;-webkit-mask-image:linear-gradient(90deg,#000 60%,transparent 97%);mask-image:linear-gradient(90deg,#000 60%,transparent 97%)"><span style="position:absolute;left:0;top:1px;font-size:12px;line-height:16px;color:#555;white-space:nowrap;letter-spacing:-0.2px">Фор</span></div>
<svg width="8" height="8" style="left:1478.7px;top:11px" viewBox="0 0 8 8"><path d="M0.6,0.6 L7.4,7.4 M7.4,0.6 L0.6,7.4" stroke="#6a6a6a" stroke-width="1.35" fill="none"/></svg>
<svg width="16" height="16" style="left:1508px;top:7px" viewBox="0 0 16 16"><defs><linearGradient id="eg1508" x1="0" y1="0" x2="0" y2="1"><stop offset="0" stop-color="#a5c2dc"/><stop offset=".35" stop-color="#5f88b8"/><stop offset="1" stop-color="#2f4f88"/></linearGradient></defs><rect width="16" height="16" rx="2" fill="url(#eg1508)"/><path d="M8,2.200 c1,0 1.500,0.800 2.500,0.600 c1.500,-0.300 2.300,0.400 2.700,1.200 c0.600,1.500 0.200,3.800 -1.200,5 l1.300,1.200 l-2.300,0.400 c-0.400,1.600 -1.500,2.900 -3,3.200 c-1.500,-0.300 -2.600,-1.600 -3,-3.200 l-2.300,-0.400 l1.300,-1.200 C2.600,7.800 2.200,5.500 2.800,4 c0.400,-0.800 1.200,-1.500 2.700,-1.200 c1,0.200 1.500,-0.600 2.500,-0.600z" fill="#f0a820"/><path d="M5.500,4 c1,0.500 1.700,1.500 2.500,1.500 c0.800,0 1.500,-1 2.500,-1.500 c0.500,1.500 0,3 -1,4 c-0.500,0.500 -1,0.800 -1.500,0.800 c-0.500,0 -1,-0.300 -1.500,-0.800 c-1,-1 -1.500,-2.500 -1,-4z" fill="#f9c83a"/><ellipse cx="8" cy="11.200" rx="2.300" ry="2" fill="#f7d24c"/><circle cx="6.300" cy="5.300" r="0.700" fill="#9a4a10"/><circle cx="9.700" cy="5.300" r="0.700" fill="#9a4a10"/></svg>
<div class="a" style="left:1530.1px;top:6px;width:20px;height:18px;overflow:hidden;-webkit-mask-image:linear-gradient(90deg,#000 60%,transparent 97%);mask-image:linear-gradient(90deg,#000 60%,transparent 97%)"><span style="position:absolute;left:0;top:1px;font-size:12px;line-height:16px;color:#555;white-space:nowrap;letter-spacing:-0.2px">Фор</span></div>
<svg width="8" height="8" style="left:1558.7px;top:11px" viewBox="0 0 8 8"><path d="M0.6,0.6 L7.4,7.4 M7.4,0.6 L0.6,7.4" stroke="#6a6a6a" stroke-width="1.35" fill="none"/></svg>
<svg width="16" height="16" style="left:1588px;top:7px" viewBox="0 0 16 16"><rect width="16" height="16" fill="#5e5e4c"/><rect x="1" y="1" width="14" height="14" fill="#7c7c64"/><path d="M4,13 c0,-3 1,-6 4,-8 c3,2 4,5 4,8z" fill="#4a4038"/><path d="M6.300,4.500 h2.500 c1.800,0 1.800,2.800 0.300,3 l1.400,3 h-1.500 l-1.200,-2.800 h-0.300 v2.800 h-1.200z" fill="#f0f0ee"/></svg>
<div class="a" style="left:1610.1px;top:6px;width:20px;height:18px;overflow:hidden;-webkit-mask-image:linear-gradient(90deg,#000 60%,transparent 97%);mask-image:linear-gradient(90deg,#000 60%,transparent 97%)"><span style="position:absolute;left:0;top:1px;font-size:12px;line-height:16px;color:#555;white-space:nowrap;letter-spacing:-0.2px">RPG</span></div>
<svg width="8" height="8" style="left:1638.7px;top:11px" viewBox="0 0 8 8"><path d="M0.6,0.6 L7.4,7.4 M7.4,0.6 L0.6,7.4" stroke="#6a6a6a" stroke-width="1.35" fill="none"/></svg>
<span class="t" style="left:1722px;top:6px;font-size:11.5px;line-height:16px;color:#fff;font-weight:700;letter-spacing:-0.75px;text-shadow:0 0 1px #000,0 0 1px #000,0 0 2px #000,0 0 2px #333">maratgnk</span>
<svg width="140" height="28" style="left:1779px;top:0" viewBox="0 0 140 28"><path d="M20,13.5 h10" stroke="#111" stroke-width="1"/><path d="M65.5,11.5 h7 v7 h-7 z M67.5,11.5 v-2 h7 v7 h-2" stroke="#111" stroke-width="1" fill="none"/><path d="M111,8.5 l10,10 M121,8.5 l-10,10" stroke="#111" stroke-width="1.1" fill="none"/></svg>
<svg width="92" height="37" style="left:0;top:29px" viewBox="0 0 92 37"><path d="M24,18.5 H12 M17.5,13 L12,18.5 L17.5,24" stroke="#cfcfcf" stroke-width="1.8" fill="none"/><path d="M39,18.5 H51 M45.5,13 L51,18.5 L45.5,24" stroke="#cfcfcf" stroke-width="1.8" fill="none"/><path d="M79.2,14.3 A6,6 0 1 0 80.2,20.5" stroke="#5a5a5a" stroke-width="1.9" fill="none"/><path d="M80.8,10.8 v5.2 h-5.2 z" fill="#5a5a5a"/></svg>
<div class="a" style="left:93px;top:33px;width:1695px;height:28px;background:#fff;border:1px solid #adadad;border-radius:3px"></div>
<svg width="12" height="14" style="left:100px;top:40px" viewBox="0 0 12 14"><rect x="1.5" y="6" width="9" height="7" rx="0.8" fill="#0b8043"/><path d="M3.5,6.5 V4.2 a2.5,2.5 0 0 1 5,0 V6.5" stroke="#0b8043" stroke-width="1.6" fill="none"/></svg>
<span class="t" style="left:119px;top:38.75px;font-size:13.5px;line-height:17.5px;color:#0b8043;letter-spacing:0.346px;">Надежный</span>
<div class="a" style="left:197px;top:39px;width:1px;height:17px;background:#c4c4c4"></div>
<span class="t" style="left:205px;top:38.75px;font-size:13.5px;line-height:17.5px;color:#777;letter-spacing:0.238px;"><span style="color:#0b8043">https</span><span style="color:#777">://</span><span style="color:#222">vk.com</span><span style="color:#777">/nyashen_corparation1</span></span>
<svg width="16" height="16" style="left:1766px;top:39px" viewBox="0 0 16 16"><path d="M8,1.6 L9.9,6 L14.6,6.4 L11,9.5 L12.1,14.1 L8,11.6 L3.9,14.1 L5,9.5 L1.4,6.4 L6.1,6 Z" fill="none" stroke="#5a5a5a" stroke-width="1.4" stroke-linejoin="round"/></svg>
<svg width="20" height="18.400" preserveAspectRatio="none" style="left:1796.200px;top:37.700px" viewBox="0 0 20 20"><defs><linearGradient id="ex1" x1="0" y1="0" x2="0" y2="1"><stop offset="0" stop-color="#5d98a8"/><stop offset="1" stop-color="#3a7486"/></linearGradient></defs><path d="M10,1.300 C11.800,1.300 12.800,3 13.700,4.800 L17.400,12.300 C18.800,15.300 17.800,18.300 14.600,18.300 L5.400,18.300 C2.200,18.300 1.200,15.300 2.600,12.300 L6.300,4.800 C7.200,3 8.200,1.300 10,1.300Z" fill="url(#ex1)"/><path d="M10,5.200 C11.200,5.200 11.800,6.300 12.400,7.500 L14.800,12.400 C15.700,14.400 15,16.300 13,16.300 L7,16.300 C5,16.300 4.300,14.400 5.200,12.400 L7.600,7.500 C8.200,6.300 8.800,5.200 10,5.200Z" fill="#d4e6ea"/><ellipse cx="10" cy="11.500" rx="2.700" ry="3.500" fill="#fff" stroke="#46707f" stroke-width="1.100"/></svg>
<svg width="24" height="24" style="left:1830px;top:38px" viewBox="0 0 24 24"><circle cx="8.5" cy="8.5" r="7.5" fill="#f0592b"/><path d="M12,4.5 L7.5,11.5 M5.5,12 l3,1.5 l-1,-3z" stroke="#fff" stroke-width="1.4" fill="#fff"/><rect x="11" y="12" width="10.5" height="10.5" fill="#5a5a5a"/><text x="16.2" y="20.6" font-size="9.5" font-weight="700" fill="#e8e8e8" text-anchor="middle" font-family="Liberation Sans">4</text></svg>
<svg width="22" height="24" style="left:1859px;top:38px" viewBox="0 0 22 24"><rect x="4" y="1.5" width="14" height="11" rx="1.5" fill="#151515"/><path d="M7,7 c1.5,1.5 3,1.8 4.5,0.8 c1.2,-0.8 2.3,-0.3 3.5,-1" stroke="#fff" stroke-width="1.3" fill="none"/><rect x="1" y="11.700" width="20" height="11.300" rx="1" fill="#3f7fe6"/><text x="11" y="20.300" font-size="8.6" font-weight="700" fill="#fff" text-anchor="middle" font-family="Liberation Sans">new</text></svg>
<svg width="4" height="16" style="left:1900px;top:39.5px" viewBox="0 0 4 16"><circle cx="2" cy="2.900" r="1.450" fill="#5a5a5a"/><circle cx="2" cy="8" r="1.450" fill="#5a5a5a"/><circle cx="2" cy="13.100" r="1.450" fill="#5a5a5a"/></svg>
<div class="a" style="left:1903px;top:66px;width:15px;height:974px;background:#f1f1f1"></div>
<svg width="15" height="974" style="left:1903px;top:66px" viewBox="0 0 15 974"><path d="M3.5,9.5 L7.5,5 L11.5,9.5z" fill="#505050"/><path d="M3.5,963 L7.5,967.5 L11.5,963z" fill="#505050"/><rect x="2" y="718" width="12" height="27" fill="#c1c1c1"/></svg>
<div class="a" style="left:0;top:1040px;width:1919px;height:39px;background:#06070d"></div>
<div class="a" style="left:51px;top:1040px;width:48px;height:38px;background:#373739"></div>
<svg width="16.5" height="16.5" style="left:15.8px;top:1051.5px" viewBox="0 0 18 18"><path d="M0,2.500 L7.300,1.500 V8.500 H0z M8.300,1.350 L18,0 V8.500 H8.300z M0,9.500 H7.300 V16.500 L0,15.500z M8.300,9.500 H18 V18 L8.300,16.650z" fill="#fff"/></svg>
<svg width="22.6" height="22.6" style="left:63.7px;top:1048.7px" viewBox="0 0 24 24"><circle cx="12" cy="12" r="11.500" fill="#fff"/><path d="M12,12 L1.800,6.400 A11.500,11.500 0 0 1 22.200,6.400 z" fill="#e33b2e"/><path d="M12,12 L22.200,6.400 A11.500,11.500 0 0 1 11.200,23.470 z" fill="#fbc116"/><path d="M12,12 L11.200,23.470 A11.500,11.500 0 0 1 1.800,6.400 z" fill="#2ba24c"/><path d="M12,6.500 h10 l-2,3z" fill="#e33b2e"/><circle cx="12" cy="12" r="5.300" fill="#fff"/><circle cx="12" cy="12" r="4.200" fill="#4b8bf4"/></svg>
<svg width="24" height="22" style="left:112px;top:1049px" viewBox="0 0 24 22"><path d="M1,2 h8 l2,2.500 h12 v14.500 h-22z" fill="#f7c95a"/><path d="M1,6.500 h22 v12.500 h-22z" fill="#fbe08a"/><rect x="5" y="10.500" width="14" height="8.500" fill="#3d9be0"/><rect x="8.500" y="14" width="7" height="5" fill="#fbe08a"/></svg>
<svg width="22" height="24" style="left:163px;top:1048px" viewBox="0 0 22 24"><rect x="1" y="1" width="20" height="22" rx="1.500" fill="#5a7aa8"/><rect x="2.500" y="2.500" width="17" height="19" fill="#6f90bd"/><path d="M9.500,3 v18 M12.500,3 v18 M3,12 h16" stroke="#3f5a85" stroke-width="1.200"/></svg>
<svg width="24" height="24" style="left:209px;top:1048px" viewBox="0 0 24 24"><circle cx="12" cy="12" r="11.500" fill="#14305a"/><circle cx="12" cy="12" r="11.500" fill="none" stroke="#2a5a96" stroke-width="1"/><circle cx="15.500" cy="9" r="3.400" fill="none" stroke="#e8eef6" stroke-width="1.600"/><circle cx="8.500" cy="15.500" r="2.600" fill="#e8eef6"/><path d="M1,12.500 L8,15.500 L13,11" stroke="#e8eef6" stroke-width="2.200" fill="none"/></svg>
<svg width="26" height="24" style="left:257px;top:1048px" viewBox="0 0 26 24"><rect x="1" y="6" width="12" height="12" fill="#b8bcc4"/><rect x="7" y="2" width="18" height="14" rx="1" fill="#e4e7ec"/><rect x="9" y="4" width="14" height="10" fill="#f8fbff"/><path d="M9.500,12 l3,-5 l2,6 l2.500,-7 l2.500,5 l2.500,-2" stroke="#3a6fc0" stroke-width="1.200" fill="none"/><rect x="13" y="16" width="6" height="4" fill="#c8ccd2"/><ellipse cx="16" cy="21" rx="6" ry="1.800" fill="#d8dbe0"/></svg>
<svg width="20" height="24" style="left:309px;top:1048px" viewBox="0 0 20 24"><rect x="1" y="1" width="18" height="22" rx="1" fill="#8fc0ea"/><rect x="3" y="3" width="14" height="6" fill="#d6eaf8"/><g fill="#cfe3f5"><rect x="3" y="11" width="3" height="2.500"/><rect x="7" y="11" width="3" height="2.500"/><rect x="11" y="11" width="3" height="2.500"/><rect x="3" y="14.500" width="3" height="2.500"/><rect x="7" y="14.500" width="3" height="2.500"/><rect x="11" y="14.500" width="3" height="2.500"/><rect x="3" y="18" width="3" height="2.500"/><rect x="7" y="18" width="3" height="2.500"/><rect x="11" y="18" width="3" height="2.500"/></g><rect x="15" y="11" width="2.500" height="9.500" fill="#f0b84a"/></svg>
<svg width="22" height="24" style="left:357px;top:1048px" viewBox="0 0 22 24"><path d="M3,1.500 h16 a2,2 0 0 1 2,2 v19.500 l-4.500,-4 h-13.500 a2,2 0 0 1 -2,-2 v-13.500 a2,2 0 0 1 2,-2z" fill="#7a86c8"/><path d="M5,14 c0,-3.500 1,-6 2,-7.500 c1.500,-1 2.500,-1.200 3,-1.200 l0.300,0.600 h1.400 l0.300,-0.600 c0.500,0 1.500,0.200 3,1.200 c1,1.500 2,4 2,7.500 c-1,1.300 -2.500,1.600 -3.300,1.600 l-0.800,-1.100 h-3.800 l-0.800,1.100 c-0.800,0 -2.300,-0.300 -3.300,-1.600z" fill="#fff"/><ellipse cx="8.600" cy="11.500" rx="1.300" ry="1.500" fill="#7a86c8"/><ellipse cx="13.400" cy="11.500" rx="1.300" ry="1.500" fill="#7a86c8"/></svg>
<svg width="24" height="24" style="left:405px;top:1048px" viewBox="0 0 24 24"><circle cx="12" cy="12" r="10" fill="#12a5e8"/><circle cx="6.500" cy="6.500" r="5.500" fill="#12a5e8"/><circle cx="17.500" cy="17.500" r="5.500" fill="#12a5e8"/><text x="12" y="18" font-size="17" font-weight="700" fill="#fff" text-anchor="middle" font-family="Liberation Sans">S</text></svg>
<svg width="24" height="24" style="left:455px;top:1048px" viewBox="0 0 24 24"><path d="M8,2 h14 l-5,19 h-14z" fill="#bfe3ea"/><path d="M9,4 h11.500 l-4.200,15.500 h-11.500z" fill="#e9f7fa"/><path d="M3,21 h14 l1.500,1.500 h-14z" fill="#8fb8c0"/><path d="M17,21 l5,-19 l1,1.500 l-4.500,19z" fill="#7aa8b2"/></svg>
<svg width="60" height="20" style="left:1696px;top:1050px" viewBox="0 0 60 20"><path d="M2,12.500 L8,6.500 L14,12.500" stroke="#fff" stroke-width="1.200" fill="none"/><path d="M27,5 h15 v10 h-15z M34.500,15 v2.500 M31,17.500 h7" stroke="#fff" stroke-width="1" fill="none"/><rect x="25.500" y="5" width="4.500" height="5" fill="#06070d" stroke="#fff" stroke-width="0.900"/><path d="M27.800,10 v8" stroke="#fff" stroke-width="0.900"/><path d="M49.500,8 h2.500 l3.500,-3 v10 l-3.500,-3 h-2.500z" stroke="#fff" stroke-width="1" fill="none"/><path d="M57.500,7.500 a3.500,3.500 0 0 1 0,5 M59.500,5.500 a6,6 0 0 1 0,9 M61.500,3.500 a8.500,8.500 0 0 1 0,13" stroke="#fff" stroke-width="1" fill="none"/></svg>
<span class="t" style="left:1772px;top:1052.00px;font-size:12px;line-height:16px;color:#fff;letter-spacing:-0.677px;">РУС</span>
<span class="t" style="left:1820px;top:1043.00px;font-size:12px;line-height:16px;color:#fff;letter-spacing:-0.606px;">19:15</span>
<span class="t" style="left:1807px;top:1061.00px;font-size:12px;line-height:16px;color:#fff;letter-spacing:-0.517px;">12.11.2017</span>
<svg width="18" height="18" style="left:1878px;top:1051px" viewBox="0 0 18 18"><path d="M1.500,1.500 h15 v11.500 h-5 l-2.500,2.500 l-2.500,-2.500 h-5z" stroke="#fff" stroke-width="1.100" fill="none"/></svg>
<div class="a" style="left:1914px;top:1040px;width:1px;height:38px;background:#4a4a4a"></div>
<div class="a" style="left:0;top:0;width:1919px;height:1px;background:#d9c274"></div>
<div class="a" style="left:0;top:0;width:1px;height:1079px;background:#d9c274"></div>
<div class="a" style="left:1918px;top:0;width:1px;height:1079px;background:#e0b96a"></div>
<div class="a" style="left:0;top:1078px;width:1919px;height:1px;background:#cfa75a"></div>
</body></html>
